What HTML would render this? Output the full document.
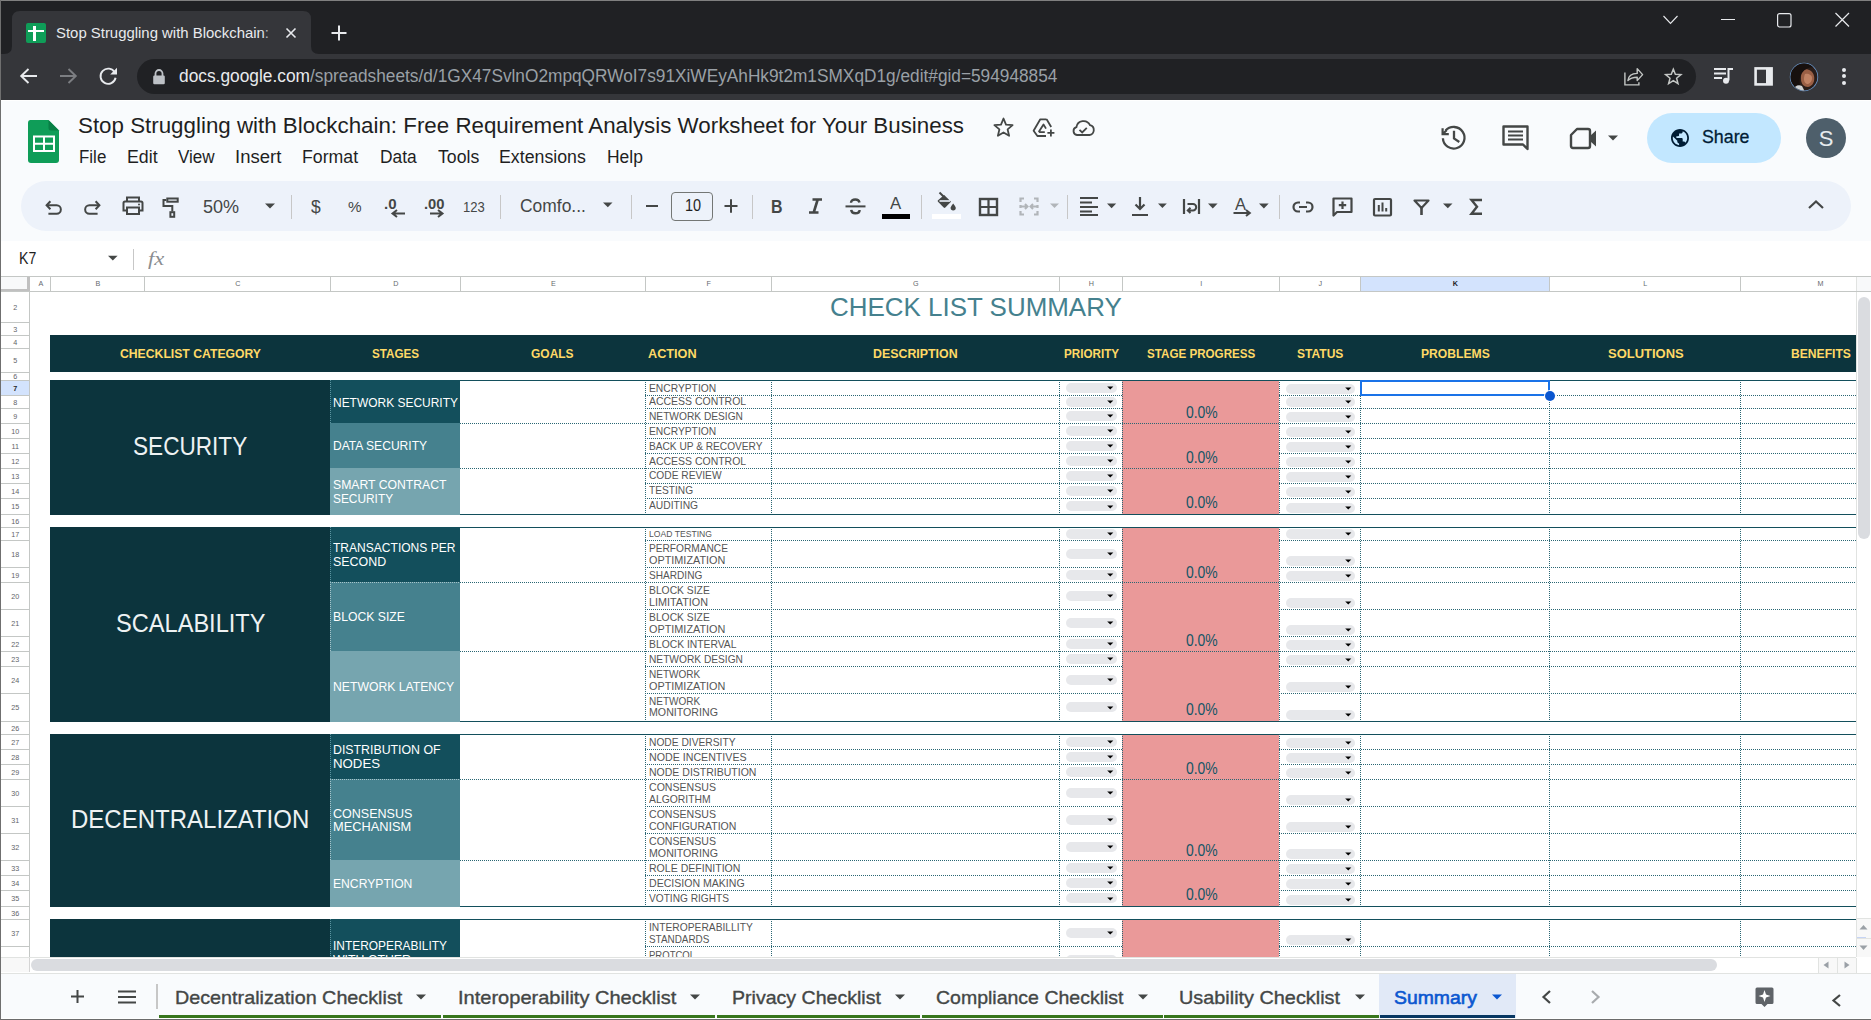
<!DOCTYPE html>
<html><head><meta charset="utf-8"><title>Check List Summary</title>
<style>
html,body{margin:0;padding:0;}
body{width:1871px;height:1020px;overflow:hidden;position:relative;background:#fff;font-family:"Liberation Sans", sans-serif;}
.t{position:absolute;white-space:nowrap;}
.r{position:absolute;}
.s{position:absolute;overflow:visible;}
</style></head><body>
<div class="r" style="left:0px;top:0px;width:1871px;height:54px;background:#202124;"></div>
<svg class="s" style="left:0px;top:0px;" width="330" height="54" viewBox="0 0 330 54"><path d="M4 54 Q12 54 12 46 L12 19 Q12 11 20 11 L303 11 Q311 11 311 19 L311 46 Q311 54 319 54 Z" fill="#35363a"/></svg>
<div class="r" style="left:26px;top:23px;width:20px;height:20px;background:#0f9d58;border-radius:2px;"></div>
<div class="r" style="left:33px;top:26px;width:2.6px;height:15px;background:#fff;"></div>
<div class="r" style="left:28px;top:29.6px;width:15.6px;height:2.7px;background:#fff;"></div>
<div class="t" style="left:56.00px;top:24.88px;font-size:15.5px;line-height:15.5px;color:#e8eaed;transform:scaleX(0.9619);transform-origin:0 0;">Stop Struggling with Blockchain:</div>
<div class="r" style="left:262px;top:20px;width:16px;height:26px;background:linear-gradient(90deg,rgba(53,54,58,0),#35363a);"></div>
<svg class="s" style="left:284px;top:26px;" width="14" height="14" viewBox="0 0 14 14"><path d="M2.5 2.5 L11.5 11.5 M11.5 2.5 L2.5 11.5" stroke="#e8eaed" stroke-width="1.6"/></svg>
<svg class="s" style="left:330px;top:24px;" width="18" height="18" viewBox="0 0 18 18"><path d="M9 1.5 V16.5 M1.5 9 H16.5" stroke="#e8eaed" stroke-width="2"/></svg>
<svg class="s" style="left:1662px;top:14px;" width="18" height="12" viewBox="0 0 18 12"><path d="M1.5 2 L8.5 9.5 L15.5 2" stroke="#e8eaed" stroke-width="1.1" fill="none"/></svg>
<div class="r" style="left:1721px;top:19px;width:13.5px;height:1.2px;background:#e8eaed;"></div>
<svg class="s" style="left:1776px;top:12px;" width="17" height="17" viewBox="0 0 17 17"><rect x="1.6" y="1.6" width="13.4" height="13.4" rx="2" stroke="#e8eaed" stroke-width="1.2" fill="none"/></svg>
<svg class="s" style="left:1834px;top:12px;" width="17" height="16" viewBox="0 0 17 16"><path d="M1.5 1 L15 14.5 M15 1 L1.5 14.5" stroke="#e8eaed" stroke-width="1.2"/></svg>
<div class="r" style="left:0px;top:54px;width:1871px;height:46px;background:#35363a;"></div>
<svg class="s" style="left:18px;top:66px;" width="22" height="20" viewBox="0 0 22 20"><path d="M19 10 H4 M10.5 3 L3.2 10 L10.5 17" stroke="#e8eaed" stroke-width="1.9" fill="none"/></svg>
<svg class="s" style="left:58px;top:66px;" width="22" height="20" viewBox="0 0 22 20"><path d="M2 10 H17 M10.5 3 L17.8 10 L10.5 17" stroke="#7c7e82" stroke-width="1.9" fill="none"/></svg>
<svg class="s" style="left:98px;top:66px;" width="22" height="21" viewBox="0 0 22 21"><path d="M16.8 6.5 A7.6 7.6 0 1 0 17.6 11.8" stroke="#e8eaed" stroke-width="1.9" fill="none"/><path d="M19 1.8 V8.6 H12.2 Z" fill="#e8eaed"/></svg>
<div class="r" style="left:137px;top:59px;width:1559px;height:35px;background:#202124;border-radius:17.5px;"></div>
<svg class="s" style="left:151px;top:68px;" width="16" height="17" viewBox="0 0 16 17"><path d="M4.5 8 V5.5 A3.5 3.5 0 0 1 11.5 5.5 V8" stroke="#bdc1c6" stroke-width="1.8" fill="none"/><rect x="2.2" y="7.6" width="11.6" height="8.6" rx="1.2" fill="#bdc1c6"/></svg>
<div class="t" style="left:179.00px;top:67.99px;font-size:17.5px;line-height:17.5px;color:#e8eaed;transform:scaleX(0.9902);transform-origin:0 0;">docs.google.com</div>
<div class="t" style="left:310.00px;top:67.99px;font-size:17.5px;line-height:17.5px;color:#9aa0a6;transform:scaleX(0.9865);transform-origin:0 0;">/spreadsheets/d/1GX47SvlnO2mpqQRWoI7s91XiWEyAhHk9t2m1SMXqD1g/edit#gid=594948854</div>
<svg class="s" style="left:1622px;top:66px;" width="24" height="22" viewBox="0 0 24 22"><path d="M2.9 6.6 V18.9 H16.9 V16.2" stroke="#c4c7c5" stroke-width="1.4" fill="none"/><path d="M5.9 14.6 C6.4 10 9.6 7.5 15.2 7.4 V2.6 L20.6 8.6 L15.2 14.6 V11.2 C10.6 11.2 7.9 12.4 5.9 14.6 Z" stroke="#c4c7c5" stroke-width="1.4" fill="none" stroke-linejoin="round"/></svg>
<svg class="s" style="left:1662px;top:66px;" width="22" height="21" viewBox="0 0 22 21"><g transform="translate(11.3 10.6) scale(0.89) translate(-11.3 -10.6)"><path d="M11.3 2.2 L13.6 8 L19.9 8.4 L15 12.4 L16.6 18.6 L11.3 15.2 L6 18.6 L7.6 12.4 L2.7 8.4 L9 8 Z" stroke="#c4c7c5" stroke-width="1.65" fill="none" stroke-linejoin="miter"/></g></svg>
<svg class="s" style="left:1712px;top:66px;" width="24" height="20" viewBox="0 0 24 20"><path d="M2 3 H14 M2 7.5 H14 M2 12 H10" stroke="#e8eaed" stroke-width="2"/><path d="M16.5 14.5 V3 H21" stroke="#e8eaed" stroke-width="2" fill="none"/><circle cx="14" cy="14.8" r="3" fill="#e8eaed"/></svg>
<svg class="s" style="left:1753px;top:66px;" width="22" height="21" viewBox="0 0 22 21"><rect x="2.6" y="2.4" width="16" height="16" stroke="#e8eaed" stroke-width="2.6" fill="none"/><rect x="13" y="2" width="6" height="17" fill="#e8eaed"/></svg>
<svg class="s" style="left:1789px;top:62px;" width="30" height="30" viewBox="0 0 30 30"><defs><clipPath id="avc"><circle cx="15" cy="15" r="13.4"/></clipPath></defs><circle cx="15" cy="15" r="14.2" fill="#6b9ad0"/><g clip-path="url(#avc)"><rect width="30" height="30" fill="#2a1d19"/><path d="M14 8 C18 6 24 9 25 14 C26 19 24 24 19 25 C15 25 12 22 12 17 C12 13 12 10 14 8Z" fill="#9a5f45"/><path d="M16 12 C19 11 23 13 23 16 C23 20 20 22 18 22 C15 21 14 17 16 12Z" fill="#c08264"/><path d="M1 4 C6 -1 19 -1 25 5 C19 5 14 8 12 13 C10 17 10 22 13 30 H1 Z" fill="#17100e"/><path d="M3 30 C5 24 9 22 13 24 L16 30Z" fill="#cfd2d4"/></g></svg>
<div class="r" style="left:1841.5px;top:67.8px;width:4px;height:4px;background:#e8eaed;border-radius:2px;"></div>
<div class="r" style="left:1841.5px;top:74.3px;width:4px;height:4px;background:#e8eaed;border-radius:2px;"></div>
<div class="r" style="left:1841.5px;top:80.7px;width:4px;height:4px;background:#e8eaed;border-radius:2px;"></div>
<div class="r" style="left:0px;top:100px;width:1871px;height:141px;background:#f9fbfd;"></div>
<div class="r" style="left:0px;top:100px;width:1871px;height:1px;background:#ffffff;"></div>
<svg class="s" style="left:27px;top:119px;" width="34" height="45" viewBox="0 0 34 45"><path d="M3.5 1 H21.5 L32 11.5 V41 Q32 44 29 44 H4 Q1 44 1 41 V4 Q1 1 3.5 1 Z" fill="#0f9d58"/><path d="M21.5 1 L32 11.5 H24 Q21.5 11.5 21.5 9 Z" fill="#087f45"/><rect x="7" y="17.5" width="20" height="14.5" fill="none" stroke="#fff" stroke-width="2"/><path d="M7 24.7 H27 M17 17.5 V32" stroke="#fff" stroke-width="2"/></svg>
<div class="t" style="left:78.00px;top:116.40px;font-size:21.5px;line-height:21.5px;color:#1f1f1f;transform:scaleX(1.0388);transform-origin:0 0;">Stop Struggling with Blockchain: Free Requirement Analysis Worksheet for Your Business</div>
<div class="t" style="left:78.60px;top:149.29px;font-size:17.5px;line-height:17.5px;color:#1f1f1f;transform:scaleX(0.9681);transform-origin:0 0;">File</div>
<div class="t" style="left:126.50px;top:149.29px;font-size:17.5px;line-height:17.5px;color:#1f1f1f;transform:scaleX(1.0147);transform-origin:0 0;">Edit</div>
<div class="t" style="left:177.70px;top:149.29px;font-size:17.5px;line-height:17.5px;color:#1f1f1f;transform:scaleX(0.9757);transform-origin:0 0;">View</div>
<div class="t" style="left:235.00px;top:149.29px;font-size:17.5px;line-height:17.5px;color:#1f1f1f;transform:scaleX(1.0579);transform-origin:0 0;">Insert</div>
<div class="t" style="left:302.30px;top:149.29px;font-size:17.5px;line-height:17.5px;color:#1f1f1f;transform:scaleX(1.0122);transform-origin:0 0;">Format</div>
<div class="t" style="left:379.70px;top:149.29px;font-size:17.5px;line-height:17.5px;color:#1f1f1f;transform:scaleX(0.9928);transform-origin:0 0;">Data</div>
<div class="t" style="left:437.70px;top:149.29px;font-size:17.5px;line-height:17.5px;color:#1f1f1f;transform:scaleX(1.0085);transform-origin:0 0;">Tools</div>
<div class="t" style="left:499.40px;top:149.29px;font-size:17.5px;line-height:17.5px;color:#1f1f1f;transform:scaleX(1.0140);transform-origin:0 0;">Extensions</div>
<div class="t" style="left:606.80px;top:149.29px;font-size:17.5px;line-height:17.5px;color:#1f1f1f;transform:scaleX(0.9975);transform-origin:0 0;">Help</div>
<svg class="s" style="left:992px;top:115.5px;" width="23" height="21" viewBox="0 0 23 21"><path d="M11.5 2.5 L14 8.6 L20.6 9.1 L15.6 13.4 L17.1 19.8 L11.5 16.4 L5.9 19.8 L7.4 13.4 L2.4 9.1 L9 8.6 Z" stroke="#444746" stroke-width="1.8" fill="none" stroke-linejoin="round"/></svg>
<svg class="s" style="left:1031px;top:117px;" width="25" height="22" viewBox="0 0 25 22"><path d="M15.6 2.3 H9.3 L2.6 13.8 L6.4 19 H15 M15.6 2.3 L20.2 10 M7.7 15.1 L12.5 7.4 L15 11.6 M7.7 15.1 H13.8" stroke="#444746" stroke-width="1.8" fill="none" stroke-linejoin="round"/><path d="M19.9 12.4 V19.4 M16.4 15.9 H23.4" stroke="#444746" stroke-width="1.8"/></svg>
<svg class="s" style="left:1070px;top:119px;" width="26" height="18" viewBox="0 0 26 18"><path d="M7 16 H19.5 A5 5 0 0 0 20 6.2 A7.2 7.2 0 0 0 6.4 8.2 A4 4 0 0 0 7 16 Z" stroke="#444746" stroke-width="1.8" fill="none"/><path d="M9.5 10.8 L12.2 13.4 L16.8 8.8" stroke="#444746" stroke-width="1.8" fill="none"/></svg>
<svg class="s" style="left:1439px;top:123px;" width="30" height="30" viewBox="0 0 30 30"><path d="M3.9 15.3 A10.8 10.8 0 1 0 6.6 7.6" stroke="#444746" stroke-width="2.3" fill="none"/><path d="M3.6 5.2 V11.2 H9.8 M3.8 11 L7.6 7.2" stroke="#444746" stroke-width="2.2" fill="none"/><path d="M15 7.7 V15.5 L20.3 19" stroke="#444746" stroke-width="2.3" fill="none"/></svg>
<svg class="s" style="left:1501px;top:124px;" width="30" height="28" viewBox="0 0 30 28"><path d="M2.5 2.5 H26.5 V25 L22 20.5 H2.5 Z" stroke="#444746" stroke-width="2.4" fill="none" stroke-linejoin="round"/><path d="M7 7.5 H22 M7 11.5 H22 M7 15.5 H22" stroke="#444746" stroke-width="2.2"/></svg>
<svg class="s" style="left:1568px;top:126px;" width="32" height="25" viewBox="0 0 32 25"><path d="M9 3 H20 Q22 3 22 5 V20 Q22 22 20 22 H5 Q3 22 3 20 V9 Z" stroke="#444746" stroke-width="2.4" fill="none" stroke-linejoin="round"/><path d="M22 10 L28 4.5 V20.5 L22 15 Z" fill="#444746"/></svg>
<svg class="s" style="left:1607px;top:134px;" width="13" height="8" viewBox="0 0 13 8"><path d="M1 1.5 H11 L6 6.5 Z" fill="#444746"/></svg>
<div class="r" style="left:1647px;top:113px;width:134px;height:50px;background:#c2e7ff;border-radius:25px;"></div>
<svg class="s" style="left:1670px;top:128px;" width="20" height="20" viewBox="0 0 20 20"><path transform="scale(0.9) translate(-0.9,-0.9)" d="M12 2C6.48 2 2 6.48 2 12s4.48 10 10 10 10-4.48 10-10S17.52 2 12 2zm-1 17.93c-3.95-.49-7-3.85-7-7.93 0-.62.08-1.21.21-1.79L9 15v1c0 1.1.9 2 2 2v1.93zm6.9-2.54c-.26-.81-1-1.39-1.9-1.39h-1v-3c0-.55-.45-1-1-1H8v-2h2c.55 0 1-.45 1-1V7h2c1.1 0 2-.9 2-2v-.41c2.93 1.19 5 4.06 5 7.41 0 2.08-.8 3.97-2.1 5.39z" fill="#001d35"/></svg>
<div class="t" style="left:1701.50px;top:127.74px;font-size:18.5px;line-height:18.5px;color:#001d35;transform:scaleX(0.9622);transform-origin:0 0;-webkit-text-stroke:0.3px #001d35;">Share</div>
<div class="r" style="left:1806px;top:118px;width:40px;height:40px;background:#4e5f6b;border-radius:20px;"></div>
<div class="t" style="left:1818.66px;top:127.88px;font-size:22px;line-height:22px;color:#e6ebee;">S</div>
<div class="r" style="left:21px;top:181px;width:1830px;height:50px;background:#edf2fa;border-radius:25px;"></div>
<svg class="s" style="left:44px;top:198px;" width="20" height="19" viewBox="0 0 20 19"><path d="M6.4 3.2 L2.6 7.2 L6.4 11.2" stroke="#444746" stroke-width="2" fill="none"/><path d="M3 7.2 H12.6 A4.25 4.25 0 0 1 12.6 15.7 H4.4" stroke="#444746" stroke-width="2" fill="none"/></svg>
<svg class="s" style="left:82px;top:198px;" width="20" height="19" viewBox="0 0 20 19"><path d="M13.6 3.2 L17.4 7.2 L13.6 11.2" stroke="#444746" stroke-width="2" fill="none"/><path d="M17 7.2 H7.4 A4.25 4.25 0 0 0 7.4 15.7 H15.6" stroke="#444746" stroke-width="2" fill="none"/></svg>
<svg class="s" style="left:121px;top:195.3px;" width="24" height="21" viewBox="0 0 24 21"><path d="M6 6 V2.5 H18 V6" stroke="#444746" stroke-width="2" fill="none"/><path d="M5.5 15.5 H2.5 V8 Q2.5 6.5 4 6.5 H20 Q21.5 6.5 21.5 8 V15.5 H18.5" stroke="#444746" stroke-width="2" fill="none"/><rect x="6" y="12.5" width="12" height="6.5" stroke="#444746" stroke-width="2" fill="none"/><circle cx="18" cy="9.6" r="1" fill="#444746"/></svg>
<svg class="s" style="left:160px;top:196px;" width="21" height="23" viewBox="0 0 21 23"><rect x="7.3" y="2.5" width="10.4" height="3.2" stroke="#444746" stroke-width="2" fill="none"/><path d="M6.3 4.1 H3.5 V10 H12.3 V15.5" stroke="#444746" stroke-width="2" fill="none"/><rect x="10.4" y="16.2" width="3.8" height="4.6" stroke="#444746" stroke-width="2" fill="none"/></svg>
<div class="t" style="left:202.80px;top:199.39px;font-size:17.5px;line-height:17.5px;color:#444746;transform:scaleX(1.0307);transform-origin:0 0;">50%</div>
<svg class="s" style="left:264px;top:202px;" width="12" height="8" viewBox="0 0 12 8"><path d="M1 1.6 H11.0 L6.0 6.6 Z" fill="#444746"/></svg>
<div class="r" style="left:291px;top:194.5px;width:1px;height:24px;background:#c7c7c7;"></div>
<div class="r" style="left:500px;top:194.5px;width:1px;height:24px;background:#c7c7c7;"></div>
<div class="r" style="left:631px;top:194.5px;width:1px;height:24px;background:#c7c7c7;"></div>
<div class="r" style="left:752px;top:194.5px;width:1px;height:24px;background:#c7c7c7;"></div>
<div class="r" style="left:921px;top:194.5px;width:1px;height:24px;background:#c7c7c7;"></div>
<div class="r" style="left:1067px;top:194.5px;width:1px;height:24px;background:#c7c7c7;"></div>
<div class="r" style="left:1279px;top:194.5px;width:1px;height:24px;background:#c7c7c7;"></div>
<div class="t" style="left:310.80px;top:199.39px;font-size:17.5px;line-height:17.5px;color:#444746;transform:scaleX(0.9966);transform-origin:0 0;">$</div>
<div class="t" style="left:348.00px;top:199.48px;font-size:15.5px;line-height:15.5px;color:#444746;transform:scaleX(0.9868);transform-origin:0 0;">%</div>
<div class="t" style="left:384.00px;top:197.15px;font-size:14px;line-height:14px;color:#444746;transform:scaleX(1.0706);transform-origin:0 0;font-weight:bold;">.0</div>
<svg class="s" style="left:389px;top:209px;" width="18" height="9" viewBox="0 0 18 9"><path d="M4 4.5 H16 M8 1 L3.5 4.5 L8 8" stroke="#444746" stroke-width="2" fill="none"/></svg>
<div class="t" style="left:423.70px;top:197.15px;font-size:14px;line-height:14px;color:#444746;transform:scaleX(1.0533);transform-origin:0 0;font-weight:bold;">.00</div>
<svg class="s" style="left:428px;top:209px;" width="18" height="9" viewBox="0 0 18 9"><path d="M2 4.5 H14 M10 1 L14.5 4.5 L10 8" stroke="#444746" stroke-width="2" fill="none"/></svg>
<div class="t" style="left:463.40px;top:198.78px;font-size:15.5px;line-height:15.5px;color:#444746;transform:scaleX(0.8430);transform-origin:0 0;">123</div>
<div class="t" style="left:519.90px;top:198.29px;font-size:17.5px;line-height:17.5px;color:#444746;transform:scaleX(0.9965);transform-origin:0 0;">Comfo...</div>
<svg class="s" style="left:602px;top:201px;" width="11" height="8" viewBox="0 0 11 8"><path d="M1 1.6 H10.5 L5.8 6.3 Z" fill="#444746"/></svg>
<div class="r" style="left:645.6px;top:204.8px;width:12px;height:1.8px;background:#444746;"></div>
<div class="r" style="left:671px;top:191.5px;width:42px;height:29px;background:transparent;border:1px solid #747775;border-radius:4px;box-sizing:border-box;"></div>
<div class="t" style="left:684.60px;top:198.16px;font-size:16px;line-height:16px;color:#1f1f1f;transform:scaleX(0.9046);transform-origin:0 0;">10</div>
<svg class="s" style="left:723px;top:198px;" width="16" height="16" viewBox="0 0 16 16"><path d="M8 1.2 V14.8 M1.5 8 H14.5" stroke="#444746" stroke-width="2"/></svg>
<div class="t" style="left:770.80px;top:197.56px;font-size:18px;line-height:18px;color:#444746;font-weight:bold;transform:scaleX(0.8847);transform-origin:0 0;">B</div>
<svg class="s" style="left:806px;top:198px;" width="19" height="16" viewBox="0 0 19 16"><path d="M6.5 1.5 H16 M3 14.5 H12.5 M11.7 1.5 L7.7 14.5" stroke="#444746" stroke-width="2.6" fill="none"/></svg>
<svg class="s" style="left:844px;top:198px;" width="23" height="17" viewBox="0 0 23 17"><path d="M1.5 8.4 H21.5" stroke="#444746" stroke-width="2"/><path d="M15.5 4.5 C15 2 13 1.5 11.3 1.5 C8.5 1.5 7 3 7 4.7 M7.2 11.8 C7.5 14 9 15.3 11.3 15.3 C14 15.3 15.6 13.8 15.6 12" stroke="#444746" stroke-width="2.4" fill="none"/></svg>
<div class="t" style="left:890.00px;top:195.96px;font-size:16px;line-height:16px;color:#444746;transform:scaleX(1.0495);transform-origin:0 0;">A</div>
<div class="r" style="left:882px;top:214px;width:28px;height:5px;background:#000000;"></div>
<svg class="s" style="left:935px;top:191px;" width="22" height="20" viewBox="0 0 22 20"><path d="M4.5 1.5 L9 6" stroke="#444746" stroke-width="2"/><path d="M9.2 4 L16 10.8 L10.3 16.5 Q9.5 17.3 8.7 16.5 L3 10.8 Q2.2 10 3 9.2 Z" fill="#444746"/><path d="M4.5 10 H15" stroke="#edf2fa" stroke-width="1.6"/><path d="M18.2 12.5 Q20.8 15.8 20.8 16.8 A2.6 2.6 0 0 1 15.6 16.8 Q15.6 15.8 18.2 12.5 Z" fill="#444746"/></svg>
<div class="r" style="left:932px;top:214px;width:29px;height:5px;background:#ffffff;"></div>
<svg class="s" style="left:978px;top:197px;" width="21" height="20" viewBox="0 0 21 20"><rect x="2" y="2" width="17" height="16" stroke="#444746" stroke-width="2.4" fill="none"/><path d="M10.5 2 V18 M2 10 H19" stroke="#444746" stroke-width="2.2"/></svg>
<svg class="s" style="left:1018px;top:196px;" width="22" height="21" viewBox="0 0 22 21"><path d="M2.5 6 V2.5 H6 M16 2.5 H19.5 V6 M2.5 15 V18.5 H6 M16 18.5 H19.5 V15 M2.5 9 V12 M19.5 9 V12" stroke="#b1b5b9" stroke-width="2.2" fill="none"/><path d="M3 10.5 H9.5 M7 8 L9.5 10.5 L7 13 M19 10.5 H12.5 M15 8 L12.5 10.5 L15 13" stroke="#b1b5b9" stroke-width="2" fill="none"/></svg>
<svg class="s" style="left:1049px;top:202px;" width="11" height="8" viewBox="0 0 11 8"><path d="M1 1.6 H10.0 L5.5 6.1 Z" fill="#b1b5b9"/></svg>
<svg class="s" style="left:1079px;top:196px;" width="20" height="20" viewBox="0 0 20 20"><path d="M1 2 H19 M1 6.5 H13 M1 11 H19 M1 15.5 H13 M1 19 H19" stroke="#444746" stroke-width="2"/></svg>
<svg class="s" style="left:1106px;top:202px;" width="11" height="8" viewBox="0 0 11 8"><path d="M1 1.6 H10.2 L5.6 6.2 Z" fill="#444746"/></svg>
<svg class="s" style="left:1131px;top:196px;" width="18" height="21" viewBox="0 0 18 21"><path d="M9 1 V13 M4.5 8.5 L9 13 L13.5 8.5" stroke="#444746" stroke-width="2.2" fill="none"/><path d="M1 19 H17" stroke="#444746" stroke-width="2"/></svg>
<svg class="s" style="left:1157px;top:202px;" width="10" height="8" viewBox="0 0 10 8"><path d="M1 1.6 H9.8 L5.4 6.0 Z" fill="#444746"/></svg>
<svg class="s" style="left:1182px;top:198px;" width="19" height="17" viewBox="0 0 19 17"><path d="M2 1 V16 M17 1 V16" stroke="#444746" stroke-width="2.2"/><path d="M5.5 6 H11 A3.2 3.2 0 0 1 11 12.4 H6.5 M8.5 9.8 L5.8 12.4 L8.5 15" stroke="#444746" stroke-width="2" fill="none"/></svg>
<svg class="s" style="left:1207px;top:202px;" width="11" height="8" viewBox="0 0 11 8"><path d="M1 1.6 H10.6 L5.8 6.4 Z" fill="#444746"/></svg>
<div class="t" style="left:1235.00px;top:196.96px;font-size:16px;line-height:16px;color:#444746;transform:scaleX(1.0307);transform-origin:0 0;">A</div>
<svg class="s" style="left:1232px;top:209px;" width="20" height="8" viewBox="0 0 20 8"><path d="M1.5 4 H17.5 M14 1 L17.8 4 L14 7" stroke="#444746" stroke-width="2" fill="none"/></svg>
<svg class="s" style="left:1258px;top:202px;" width="11" height="8" viewBox="0 0 11 8"><path d="M1 1.6 H10.7 L5.9 6.5 Z" fill="#444746"/></svg>
<svg class="s" style="left:1292px;top:200px;" width="22" height="14" viewBox="0 0 22 14"><path d="M8 2.5 H6 A4.5 4.5 0 0 0 6 11.5 H8 M14 2.5 H16 A4.5 4.5 0 0 1 16 11.5 H14 M7 7 H15" stroke="#444746" stroke-width="2.2" fill="none"/></svg>
<svg class="s" style="left:1331px;top:196px;" width="23" height="22" viewBox="0 0 23 22"><path d="M2.5 2.5 H20.5 V16 H6 L2.5 19.5 Z" stroke="#444746" stroke-width="2.2" fill="none" stroke-linejoin="round"/><path d="M11.5 5.5 V13 M7.8 9.2 H15.2" stroke="#444746" stroke-width="2.2"/></svg>
<svg class="s" style="left:1372px;top:197px;" width="21" height="20" viewBox="0 0 21 20"><rect x="2" y="2" width="17" height="16.5" rx="1" stroke="#444746" stroke-width="2.2" fill="none"/><path d="M6.8 8 V14.5 M10.5 5.5 V14.5 M14.2 11 V14.5" stroke="#444746" stroke-width="2"/></svg>
<svg class="s" style="left:1413px;top:199px;" width="17" height="17" viewBox="0 0 17 17"><path d="M1.5 1.5 H15.5 L8.5 9 Z" stroke="#444746" stroke-width="2.2" fill="none" stroke-linejoin="round"/><path d="M8.5 8 V16" stroke="#444746" stroke-width="2.6"/></svg>
<svg class="s" style="left:1442px;top:202px;" width="11" height="8" viewBox="0 0 11 8"><path d="M1 1.6 H10.5 L5.8 6.3 Z" fill="#444746"/></svg>
<svg class="s" style="left:1470px;top:198px;" width="13" height="18" viewBox="0 0 13 18"><path d="M12 2 H1.5 L7 8.8 L1.5 15.7 H12" stroke="#444746" stroke-width="2.4" fill="none"/></svg>
<svg class="s" style="left:1807px;top:199px;" width="18" height="11" viewBox="0 0 18 11"><path d="M2 9 L9 2.5 L16 9" stroke="#444746" stroke-width="2.2" fill="none"/></svg>
<div class="r" style="left:0px;top:241px;width:1871px;height:35px;background:#ffffff;"></div>
<div class="t" style="left:19.20px;top:251.46px;font-size:16px;line-height:16px;color:#1f1f1f;transform:scaleX(0.8840);transform-origin:0 0;">K7</div>
<svg class="s" style="left:107px;top:255px;" width="12" height="7" viewBox="0 0 12 7"><path d="M1 0.8 H10.6 L5.8 5.6 Z" fill="#444746"/></svg>
<div class="r" style="left:133px;top:249px;width:1px;height:21px;background:#c7c7c7;"></div>
<div class="t" style="left:147.50px;top:249.42px;font-size:19px;line-height:19px;color:#8a8d91;font-style:italic;transform:scaleX(1.1841);transform-origin:0 0;font-family:Liberation Serif,serif;">fx</div>
<div class="r" style="left:1px;top:276px;width:1855px;height:681px;background:#ffffff;"></div>
<div class="r" style="left:1361px;top:277px;width:188px;height:14px;background:#d3e3fd;"></div>
<div class="r" style="left:1px;top:276px;width:1870px;height:1px;background:#c4c7c5;"></div>
<div class="r" style="left:29px;top:291px;width:1827px;height:1px;background:#c4c7c5;"></div>
<div class="r" style="left:1px;top:277px;width:26px;height:12px;background:#f8f9fa;"></div>
<div class="r" style="left:27px;top:277px;width:3px;height:14px;background:#c0c0c0;"></div>
<div class="r" style="left:1px;top:289px;width:29px;height:2px;background:#c0c0c0;"></div>
<div class="r" style="left:50px;top:277px;width:1px;height:14px;background:#c4c7c5;"></div>
<div class="r" style="left:144px;top:277px;width:1px;height:14px;background:#c4c7c5;"></div>
<div class="r" style="left:330px;top:277px;width:1px;height:14px;background:#c4c7c5;"></div>
<div class="r" style="left:460px;top:277px;width:1px;height:14px;background:#c4c7c5;"></div>
<div class="r" style="left:645px;top:277px;width:1px;height:14px;background:#c4c7c5;"></div>
<div class="r" style="left:771px;top:277px;width:1px;height:14px;background:#c4c7c5;"></div>
<div class="r" style="left:1059px;top:277px;width:1px;height:14px;background:#c4c7c5;"></div>
<div class="r" style="left:1122px;top:277px;width:1px;height:14px;background:#c4c7c5;"></div>
<div class="r" style="left:1279px;top:277px;width:1px;height:14px;background:#c4c7c5;"></div>
<div class="r" style="left:1360px;top:277px;width:1px;height:14px;background:#c4c7c5;"></div>
<div class="r" style="left:1549px;top:277px;width:1px;height:14px;background:#c4c7c5;"></div>
<div class="r" style="left:1740px;top:277px;width:1px;height:14px;background:#c4c7c5;"></div>
<div class="r" style="left:1856px;top:277px;width:1px;height:14px;background:#c4c7c5;"></div>
<div class="t" style="left:38.40px;top:280.11px;font-size:7.2px;line-height:7.2px;color:#666a6e;">A</div>
<div class="t" style="left:95.40px;top:280.11px;font-size:7.2px;line-height:7.2px;color:#666a6e;">B</div>
<div class="t" style="left:235.20px;top:280.11px;font-size:7.2px;line-height:7.2px;color:#666a6e;">C</div>
<div class="t" style="left:393.20px;top:280.11px;font-size:7.2px;line-height:7.2px;color:#666a6e;">D</div>
<div class="t" style="left:550.90px;top:280.11px;font-size:7.2px;line-height:7.2px;color:#666a6e;">E</div>
<div class="t" style="left:706.60px;top:280.11px;font-size:7.2px;line-height:7.2px;color:#666a6e;">F</div>
<div class="t" style="left:913.00px;top:280.11px;font-size:7.2px;line-height:7.2px;color:#666a6e;">G</div>
<div class="t" style="left:1088.70px;top:280.11px;font-size:7.2px;line-height:7.2px;color:#666a6e;">H</div>
<div class="t" style="left:1200.30px;top:280.11px;font-size:7.2px;line-height:7.2px;color:#666a6e;">I</div>
<div class="t" style="left:1318.50px;top:280.11px;font-size:7.2px;line-height:7.2px;color:#666a6e;">J</div>
<div class="t" style="left:1452.70px;top:280.11px;font-size:7.2px;line-height:7.2px;color:#1f1f1f;font-weight:bold;">K</div>
<div class="t" style="left:1643.30px;top:280.11px;font-size:7.2px;line-height:7.2px;color:#666a6e;">L</div>
<div class="t" style="left:1817.50px;top:280.11px;font-size:7.2px;line-height:7.2px;color:#666a6e;">M</div>
<div class="r" style="left:29px;top:291px;width:1px;height:666px;background:#c4c7c5;"></div>
<div class="r" style="left:1px;top:380px;width:28px;height:15px;background:#d3e3fd;"></div>
<div class="r" style="left:1px;top:291px;width:28px;height:1px;background:#c4c7c5;"></div>
<div class="r" style="left:1px;top:322px;width:28px;height:1px;background:#c4c7c5;"></div>
<div class="r" style="left:1px;top:335px;width:28px;height:1px;background:#c4c7c5;"></div>
<div class="r" style="left:1px;top:348px;width:28px;height:1px;background:#c4c7c5;"></div>
<div class="r" style="left:1px;top:372px;width:28px;height:1px;background:#c4c7c5;"></div>
<div class="r" style="left:1px;top:380px;width:28px;height:1px;background:#c4c7c5;"></div>
<div class="r" style="left:1px;top:395px;width:28px;height:1px;background:#c4c7c5;"></div>
<div class="r" style="left:1px;top:408px;width:28px;height:1px;background:#c4c7c5;"></div>
<div class="r" style="left:1px;top:423px;width:28px;height:1px;background:#c4c7c5;"></div>
<div class="r" style="left:1px;top:438px;width:28px;height:1px;background:#c4c7c5;"></div>
<div class="r" style="left:1px;top:453px;width:28px;height:1px;background:#c4c7c5;"></div>
<div class="r" style="left:1px;top:468px;width:28px;height:1px;background:#c4c7c5;"></div>
<div class="r" style="left:1px;top:483px;width:28px;height:1px;background:#c4c7c5;"></div>
<div class="r" style="left:1px;top:498px;width:28px;height:1px;background:#c4c7c5;"></div>
<div class="r" style="left:1px;top:514px;width:28px;height:1px;background:#c4c7c5;"></div>
<div class="r" style="left:1px;top:527px;width:28px;height:1px;background:#c4c7c5;"></div>
<div class="r" style="left:1px;top:540px;width:28px;height:1px;background:#c4c7c5;"></div>
<div class="r" style="left:1px;top:567px;width:28px;height:1px;background:#c4c7c5;"></div>
<div class="r" style="left:1px;top:582px;width:28px;height:1px;background:#c4c7c5;"></div>
<div class="r" style="left:1px;top:609px;width:28px;height:1px;background:#c4c7c5;"></div>
<div class="r" style="left:1px;top:636px;width:28px;height:1px;background:#c4c7c5;"></div>
<div class="r" style="left:1px;top:651px;width:28px;height:1px;background:#c4c7c5;"></div>
<div class="r" style="left:1px;top:666px;width:28px;height:1px;background:#c4c7c5;"></div>
<div class="r" style="left:1px;top:693px;width:28px;height:1px;background:#c4c7c5;"></div>
<div class="r" style="left:1px;top:721px;width:28px;height:1px;background:#c4c7c5;"></div>
<div class="r" style="left:1px;top:734px;width:28px;height:1px;background:#c4c7c5;"></div>
<div class="r" style="left:1px;top:749px;width:28px;height:1px;background:#c4c7c5;"></div>
<div class="r" style="left:1px;top:764px;width:28px;height:1px;background:#c4c7c5;"></div>
<div class="r" style="left:1px;top:779px;width:28px;height:1px;background:#c4c7c5;"></div>
<div class="r" style="left:1px;top:806px;width:28px;height:1px;background:#c4c7c5;"></div>
<div class="r" style="left:1px;top:833px;width:28px;height:1px;background:#c4c7c5;"></div>
<div class="r" style="left:1px;top:860px;width:28px;height:1px;background:#c4c7c5;"></div>
<div class="r" style="left:1px;top:875px;width:28px;height:1px;background:#c4c7c5;"></div>
<div class="r" style="left:1px;top:890px;width:28px;height:1px;background:#c4c7c5;"></div>
<div class="r" style="left:1px;top:906px;width:28px;height:1px;background:#c4c7c5;"></div>
<div class="r" style="left:1px;top:919px;width:28px;height:1px;background:#c4c7c5;"></div>
<div class="r" style="left:1px;top:946px;width:28px;height:1px;background:#c4c7c5;"></div>
<div class="t" style="left:13.20px;top:303.51px;font-size:7.2px;line-height:7.2px;color:#5f6368;">2</div>
<div class="t" style="left:13.20px;top:325.51px;font-size:7.2px;line-height:7.2px;color:#5f6368;">3</div>
<div class="t" style="left:13.20px;top:338.51px;font-size:7.2px;line-height:7.2px;color:#5f6368;">4</div>
<div class="t" style="left:13.20px;top:357.01px;font-size:7.2px;line-height:7.2px;color:#5f6368;">5</div>
<div class="t" style="left:13.20px;top:373.01px;font-size:7.2px;line-height:7.2px;color:#5f6368;">6</div>
<div class="t" style="left:13.20px;top:384.51px;font-size:7.2px;line-height:7.2px;color:#1f1f1f;font-weight:bold;">7</div>
<div class="t" style="left:13.20px;top:398.51px;font-size:7.2px;line-height:7.2px;color:#5f6368;">8</div>
<div class="t" style="left:13.20px;top:412.51px;font-size:7.2px;line-height:7.2px;color:#5f6368;">9</div>
<div class="t" style="left:11.20px;top:427.51px;font-size:7.2px;line-height:7.2px;color:#5f6368;">10</div>
<div class="t" style="left:11.46px;top:442.51px;font-size:7.2px;line-height:7.2px;color:#5f6368;">11</div>
<div class="t" style="left:11.20px;top:457.51px;font-size:7.2px;line-height:7.2px;color:#5f6368;">12</div>
<div class="t" style="left:11.20px;top:472.51px;font-size:7.2px;line-height:7.2px;color:#5f6368;">13</div>
<div class="t" style="left:11.20px;top:487.51px;font-size:7.2px;line-height:7.2px;color:#5f6368;">14</div>
<div class="t" style="left:11.20px;top:503.01px;font-size:7.2px;line-height:7.2px;color:#5f6368;">15</div>
<div class="t" style="left:11.20px;top:517.51px;font-size:7.2px;line-height:7.2px;color:#5f6368;">16</div>
<div class="t" style="left:11.20px;top:530.51px;font-size:7.2px;line-height:7.2px;color:#5f6368;">17</div>
<div class="t" style="left:11.20px;top:550.51px;font-size:7.2px;line-height:7.2px;color:#5f6368;">18</div>
<div class="t" style="left:11.20px;top:571.51px;font-size:7.2px;line-height:7.2px;color:#5f6368;">19</div>
<div class="t" style="left:11.20px;top:592.51px;font-size:7.2px;line-height:7.2px;color:#5f6368;">20</div>
<div class="t" style="left:11.20px;top:619.51px;font-size:7.2px;line-height:7.2px;color:#5f6368;">21</div>
<div class="t" style="left:11.20px;top:640.51px;font-size:7.2px;line-height:7.2px;color:#5f6368;">22</div>
<div class="t" style="left:11.20px;top:655.51px;font-size:7.2px;line-height:7.2px;color:#5f6368;">23</div>
<div class="t" style="left:11.20px;top:676.51px;font-size:7.2px;line-height:7.2px;color:#5f6368;">24</div>
<div class="t" style="left:11.20px;top:704.01px;font-size:7.2px;line-height:7.2px;color:#5f6368;">25</div>
<div class="t" style="left:11.20px;top:724.51px;font-size:7.2px;line-height:7.2px;color:#5f6368;">26</div>
<div class="t" style="left:11.20px;top:738.51px;font-size:7.2px;line-height:7.2px;color:#5f6368;">27</div>
<div class="t" style="left:11.20px;top:753.51px;font-size:7.2px;line-height:7.2px;color:#5f6368;">28</div>
<div class="t" style="left:11.20px;top:768.51px;font-size:7.2px;line-height:7.2px;color:#5f6368;">29</div>
<div class="t" style="left:11.20px;top:789.51px;font-size:7.2px;line-height:7.2px;color:#5f6368;">30</div>
<div class="t" style="left:11.20px;top:816.51px;font-size:7.2px;line-height:7.2px;color:#5f6368;">31</div>
<div class="t" style="left:11.20px;top:843.51px;font-size:7.2px;line-height:7.2px;color:#5f6368;">32</div>
<div class="t" style="left:11.20px;top:864.51px;font-size:7.2px;line-height:7.2px;color:#5f6368;">33</div>
<div class="t" style="left:11.20px;top:879.51px;font-size:7.2px;line-height:7.2px;color:#5f6368;">34</div>
<div class="t" style="left:11.20px;top:895.01px;font-size:7.2px;line-height:7.2px;color:#5f6368;">35</div>
<div class="t" style="left:11.20px;top:909.51px;font-size:7.2px;line-height:7.2px;color:#5f6368;">36</div>
<div class="t" style="left:11.20px;top:929.51px;font-size:7.2px;line-height:7.2px;color:#5f6368;">37</div>
<div class="t" style="left:829.90px;top:294.24px;font-size:26.3px;line-height:26.3px;color:#45818e;transform:scaleX(0.9868);transform-origin:0 0;">CHECK LIST SUMMARY</div>
<div class="r" style="left:50px;top:335px;width:1806px;height:37px;background:#0c343d;"></div>
<div class="t" style="left:120.20px;top:346.56px;font-size:13.4px;line-height:13.4px;color:#ffd966;font-weight:bold;transform:scaleX(0.9112);transform-origin:0 0;">CHECKLIST CATEGORY</div>
<div class="t" style="left:372.00px;top:346.56px;font-size:13.4px;line-height:13.4px;color:#ffd966;font-weight:bold;transform:scaleX(0.8705);transform-origin:0 0;">STAGES</div>
<div class="t" style="left:531.40px;top:346.56px;font-size:13.4px;line-height:13.4px;color:#ffd966;font-weight:bold;transform:scaleX(0.8941);transform-origin:0 0;">GOALS</div>
<div class="t" style="left:647.80px;top:346.56px;font-size:13.4px;line-height:13.4px;color:#ffd966;font-weight:bold;transform:scaleX(0.9482);transform-origin:0 0;">ACTION</div>
<div class="t" style="left:873.40px;top:346.56px;font-size:13.4px;line-height:13.4px;color:#ffd966;font-weight:bold;transform:scaleX(0.9249);transform-origin:0 0;">DESCRIPTION</div>
<div class="t" style="left:1063.70px;top:346.56px;font-size:13.4px;line-height:13.4px;color:#ffd966;font-weight:bold;transform:scaleX(0.8707);transform-origin:0 0;">PRIORITY</div>
<div class="t" style="left:1147.10px;top:346.56px;font-size:13.4px;line-height:13.4px;color:#ffd966;font-weight:bold;transform:scaleX(0.8683);transform-origin:0 0;">STAGE PROGRESS</div>
<div class="t" style="left:1297.20px;top:346.56px;font-size:13.4px;line-height:13.4px;color:#ffd966;font-weight:bold;transform:scaleX(0.8990);transform-origin:0 0;">STATUS</div>
<div class="t" style="left:1421.00px;top:346.56px;font-size:13.4px;line-height:13.4px;color:#ffd966;font-weight:bold;transform:scaleX(0.9060);transform-origin:0 0;">PROBLEMS</div>
<div class="t" style="left:1607.60px;top:346.56px;font-size:13.4px;line-height:13.4px;color:#ffd966;font-weight:bold;transform:scaleX(0.9684);transform-origin:0 0;">SOLUTIONS</div>
<div class="t" style="left:1790.50px;top:346.56px;font-size:13.4px;line-height:13.4px;color:#ffd966;font-weight:bold;transform:scaleX(0.9040);transform-origin:0 0;">BENEFITS</div>
<div class="r" style="left:50px;top:380px;width:280px;height:135px;background:#0c343d;"></div>
<div class="t" style="left:133.40px;top:432.79px;font-size:26px;line-height:26px;color:#eef2f3;transform:scaleX(0.8687);transform-origin:0 0;">SECURITY</div>
<div class="r" style="left:330px;top:380px;width:130px;height:43px;background:#134f5c;"></div>
<div class="t" style="left:332.90px;top:395.74px;font-size:13.3px;line-height:13.3px;color:#ffffff;transform:scaleX(0.8998);transform-origin:0 0;">NETWORK SECURITY</div>
<div class="r" style="left:1122px;top:380px;width:157px;height:43px;background:#ea9999;"></div>
<div class="t" style="left:1185.90px;top:404.40px;font-size:16.3px;line-height:16.3px;color:#125566;transform:scaleX(0.8559);transform-origin:0 0;">0.0%</div>
<div class="r" style="left:330px;top:423px;width:130px;height:45px;background:#45818e;"></div>
<div class="t" style="left:332.90px;top:439.14px;font-size:13.3px;line-height:13.3px;color:#ffffff;transform:scaleX(0.9074);transform-origin:0 0;">DATA SECURITY</div>
<div class="r" style="left:1122px;top:423px;width:157px;height:45px;background:#ea9999;"></div>
<div class="t" style="left:1185.90px;top:449.20px;font-size:16.3px;line-height:16.3px;color:#125566;transform:scaleX(0.8559);transform-origin:0 0;">0.0%</div>
<div class="r" style="left:460px;top:423px;width:1396px;height:1px;background:repeating-linear-gradient(90deg,#2a6673 0 1px,transparent 1px 2px);"></div>
<div class="r" style="left:330px;top:468px;width:130px;height:47px;background:#76a5af;"></div>
<div class="t" style="left:332.90px;top:478.14px;font-size:13.3px;line-height:13.3px;color:#ffffff;transform:scaleX(0.9179);transform-origin:0 0;">SMART CONTRACT</div>
<div class="t" style="left:332.90px;top:491.74px;font-size:13.3px;line-height:13.3px;color:#ffffff;transform:scaleX(0.8937);transform-origin:0 0;">SECURITY</div>
<div class="r" style="left:1122px;top:468px;width:157px;height:46px;background:#ea9999;"></div>
<div class="t" style="left:1185.90px;top:493.70px;font-size:16.3px;line-height:16.3px;color:#125566;transform:scaleX(0.8559);transform-origin:0 0;">0.0%</div>
<div class="r" style="left:460px;top:468px;width:1396px;height:1px;background:repeating-linear-gradient(90deg,#2a6673 0 1px,transparent 1px 2px);"></div>
<div class="r" style="left:330px;top:380px;width:1px;height:43px;background:repeating-linear-gradient(180deg,#5b94a0 0 1px,transparent 1px 2px);"></div>
<div class="t" style="left:648.90px;top:382.83px;font-size:10.6px;line-height:10.6px;color:#555555;transform:scaleX(0.9696);transform-origin:0 0;">ENCRYPTION</div>
<div class="r" style="left:1066px;top:382.8px;width:50.5px;height:10px;background:#e7e8eb;border-radius:5px;"></div>
<svg class="s" style="left:1107px;top:386.4px;" width="7" height="4" viewBox="0 0 7 4"><path d="M0.2 0.5 H6.3 L3.25 3.6 Z" fill="#000"/></svg>
<div class="r" style="left:1286px;top:383.7px;width:69px;height:10px;background:#e7e8eb;border-radius:5px;"></div>
<svg class="s" style="left:1345px;top:387.3px;" width="7" height="4" viewBox="0 0 7 4"><path d="M0.2 0.5 H6.3 L3.25 3.6 Z" fill="#000"/></svg>
<div class="r" style="left:645px;top:395px;width:478px;height:1px;background:repeating-linear-gradient(90deg,#2a6673 0 1px,transparent 1px 2px);"></div>
<div class="r" style="left:1279px;top:395px;width:577px;height:1px;background:repeating-linear-gradient(90deg,#2a6673 0 1px,transparent 1px 2px);"></div>
<div class="t" style="left:648.90px;top:395.63px;font-size:10.6px;line-height:10.6px;color:#555555;transform:scaleX(0.9882);transform-origin:0 0;">ACCESS CONTROL</div>
<div class="r" style="left:1066px;top:396.8px;width:50.5px;height:10px;background:#e7e8eb;border-radius:5px;"></div>
<svg class="s" style="left:1107px;top:400.4px;" width="7" height="4" viewBox="0 0 7 4"><path d="M0.2 0.5 H6.3 L3.25 3.6 Z" fill="#000"/></svg>
<div class="r" style="left:1286px;top:396.7px;width:69px;height:10px;background:#e7e8eb;border-radius:5px;"></div>
<svg class="s" style="left:1345px;top:400.3px;" width="7" height="4" viewBox="0 0 7 4"><path d="M0.2 0.5 H6.3 L3.25 3.6 Z" fill="#000"/></svg>
<div class="r" style="left:645px;top:408px;width:478px;height:1px;background:repeating-linear-gradient(90deg,#2a6673 0 1px,transparent 1px 2px);"></div>
<div class="r" style="left:1279px;top:408px;width:577px;height:1px;background:repeating-linear-gradient(90deg,#2a6673 0 1px,transparent 1px 2px);"></div>
<div class="t" style="left:648.90px;top:410.63px;font-size:10.6px;line-height:10.6px;color:#555555;transform:scaleX(0.9615);transform-origin:0 0;">NETWORK DESIGN</div>
<div class="r" style="left:1066px;top:410.8px;width:50.5px;height:10px;background:#e7e8eb;border-radius:5px;"></div>
<svg class="s" style="left:1107px;top:414.4px;" width="7" height="4" viewBox="0 0 7 4"><path d="M0.2 0.5 H6.3 L3.25 3.6 Z" fill="#000"/></svg>
<div class="r" style="left:1286px;top:411.7px;width:69px;height:10px;background:#e7e8eb;border-radius:5px;"></div>
<svg class="s" style="left:1345px;top:415.3px;" width="7" height="4" viewBox="0 0 7 4"><path d="M0.2 0.5 H6.3 L3.25 3.6 Z" fill="#000"/></svg>
<div class="t" style="left:648.90px;top:425.63px;font-size:10.6px;line-height:10.6px;color:#555555;transform:scaleX(0.9696);transform-origin:0 0;">ENCRYPTION</div>
<div class="r" style="left:1066px;top:425.8px;width:50.5px;height:10px;background:#e7e8eb;border-radius:5px;"></div>
<svg class="s" style="left:1107px;top:429.4px;" width="7" height="4" viewBox="0 0 7 4"><path d="M0.2 0.5 H6.3 L3.25 3.6 Z" fill="#000"/></svg>
<div class="r" style="left:1286px;top:426.7px;width:69px;height:10px;background:#e7e8eb;border-radius:5px;"></div>
<svg class="s" style="left:1345px;top:430.3px;" width="7" height="4" viewBox="0 0 7 4"><path d="M0.2 0.5 H6.3 L3.25 3.6 Z" fill="#000"/></svg>
<div class="r" style="left:645px;top:438px;width:478px;height:1px;background:repeating-linear-gradient(90deg,#2a6673 0 1px,transparent 1px 2px);"></div>
<div class="r" style="left:1279px;top:438px;width:577px;height:1px;background:repeating-linear-gradient(90deg,#2a6673 0 1px,transparent 1px 2px);"></div>
<div class="t" style="left:648.90px;top:440.53px;font-size:10.6px;line-height:10.6px;color:#555555;transform:scaleX(0.9578);transform-origin:0 0;">BACK UP &amp; RECOVERY</div>
<div class="r" style="left:1066px;top:440.8px;width:50.5px;height:10px;background:#e7e8eb;border-radius:5px;"></div>
<svg class="s" style="left:1107px;top:444.4px;" width="7" height="4" viewBox="0 0 7 4"><path d="M0.2 0.5 H6.3 L3.25 3.6 Z" fill="#000"/></svg>
<div class="r" style="left:1286px;top:441.7px;width:69px;height:10px;background:#e7e8eb;border-radius:5px;"></div>
<svg class="s" style="left:1345px;top:445.3px;" width="7" height="4" viewBox="0 0 7 4"><path d="M0.2 0.5 H6.3 L3.25 3.6 Z" fill="#000"/></svg>
<div class="r" style="left:645px;top:453px;width:478px;height:1px;background:repeating-linear-gradient(90deg,#2a6673 0 1px,transparent 1px 2px);"></div>
<div class="r" style="left:1279px;top:453px;width:577px;height:1px;background:repeating-linear-gradient(90deg,#2a6673 0 1px,transparent 1px 2px);"></div>
<div class="t" style="left:648.90px;top:455.53px;font-size:10.6px;line-height:10.6px;color:#555555;transform:scaleX(0.9882);transform-origin:0 0;">ACCESS CONTROL</div>
<div class="r" style="left:1066px;top:455.8px;width:50.5px;height:10px;background:#e7e8eb;border-radius:5px;"></div>
<svg class="s" style="left:1107px;top:459.4px;" width="7" height="4" viewBox="0 0 7 4"><path d="M0.2 0.5 H6.3 L3.25 3.6 Z" fill="#000"/></svg>
<div class="r" style="left:1286px;top:456.7px;width:69px;height:10px;background:#e7e8eb;border-radius:5px;"></div>
<svg class="s" style="left:1345px;top:460.3px;" width="7" height="4" viewBox="0 0 7 4"><path d="M0.2 0.5 H6.3 L3.25 3.6 Z" fill="#000"/></svg>
<div class="t" style="left:648.90px;top:470.43px;font-size:10.6px;line-height:10.6px;color:#555555;transform:scaleX(0.9630);transform-origin:0 0;">CODE REVIEW</div>
<div class="r" style="left:1066px;top:470.8px;width:50.5px;height:10px;background:#e7e8eb;border-radius:5px;"></div>
<svg class="s" style="left:1107px;top:474.4px;" width="7" height="4" viewBox="0 0 7 4"><path d="M0.2 0.5 H6.3 L3.25 3.6 Z" fill="#000"/></svg>
<div class="r" style="left:1286px;top:471.7px;width:69px;height:10px;background:#e7e8eb;border-radius:5px;"></div>
<svg class="s" style="left:1345px;top:475.3px;" width="7" height="4" viewBox="0 0 7 4"><path d="M0.2 0.5 H6.3 L3.25 3.6 Z" fill="#000"/></svg>
<div class="r" style="left:645px;top:483px;width:478px;height:1px;background:repeating-linear-gradient(90deg,#2a6673 0 1px,transparent 1px 2px);"></div>
<div class="r" style="left:1279px;top:483px;width:577px;height:1px;background:repeating-linear-gradient(90deg,#2a6673 0 1px,transparent 1px 2px);"></div>
<div class="t" style="left:648.90px;top:485.43px;font-size:10.6px;line-height:10.6px;color:#555555;transform:scaleX(0.9600);transform-origin:0 0;">TESTING</div>
<div class="r" style="left:1066px;top:485.8px;width:50.5px;height:10px;background:#e7e8eb;border-radius:5px;"></div>
<svg class="s" style="left:1107px;top:489.4px;" width="7" height="4" viewBox="0 0 7 4"><path d="M0.2 0.5 H6.3 L3.25 3.6 Z" fill="#000"/></svg>
<div class="r" style="left:1286px;top:486.7px;width:69px;height:10px;background:#e7e8eb;border-radius:5px;"></div>
<svg class="s" style="left:1345px;top:490.3px;" width="7" height="4" viewBox="0 0 7 4"><path d="M0.2 0.5 H6.3 L3.25 3.6 Z" fill="#000"/></svg>
<div class="r" style="left:645px;top:498px;width:478px;height:1px;background:repeating-linear-gradient(90deg,#2a6673 0 1px,transparent 1px 2px);"></div>
<div class="r" style="left:1279px;top:498px;width:577px;height:1px;background:repeating-linear-gradient(90deg,#2a6673 0 1px,transparent 1px 2px);"></div>
<div class="t" style="left:648.90px;top:500.43px;font-size:10.6px;line-height:10.6px;color:#555555;transform:scaleX(0.9695);transform-origin:0 0;">AUDITING</div>
<div class="r" style="left:1066px;top:501.3px;width:50.5px;height:10px;background:#e7e8eb;border-radius:5px;"></div>
<svg class="s" style="left:1107px;top:504.9px;" width="7" height="4" viewBox="0 0 7 4"><path d="M0.2 0.5 H6.3 L3.25 3.6 Z" fill="#000"/></svg>
<div class="r" style="left:1286px;top:502.7px;width:69px;height:10px;background:#e7e8eb;border-radius:5px;"></div>
<svg class="s" style="left:1345px;top:506.3px;" width="7" height="4" viewBox="0 0 7 4"><path d="M0.2 0.5 H6.3 L3.25 3.6 Z" fill="#000"/></svg>
<div class="r" style="left:645px;top:380px;width:1px;height:134px;background:repeating-linear-gradient(180deg,#2a6673 0 1px,transparent 1px 2px);"></div>
<div class="r" style="left:771px;top:380px;width:1px;height:134px;background:repeating-linear-gradient(180deg,#2a6673 0 1px,transparent 1px 2px);"></div>
<div class="r" style="left:1059px;top:380px;width:1px;height:134px;background:repeating-linear-gradient(180deg,#2a6673 0 1px,transparent 1px 2px);"></div>
<div class="r" style="left:1122px;top:380px;width:1px;height:134px;background:repeating-linear-gradient(180deg,#2a6673 0 1px,transparent 1px 2px);"></div>
<div class="r" style="left:1279px;top:380px;width:1px;height:134px;background:repeating-linear-gradient(180deg,#2a6673 0 1px,transparent 1px 2px);"></div>
<div class="r" style="left:1360px;top:380px;width:1px;height:134px;background:repeating-linear-gradient(180deg,#2a6673 0 1px,transparent 1px 2px);"></div>
<div class="r" style="left:1549px;top:380px;width:1px;height:134px;background:repeating-linear-gradient(180deg,#2a6673 0 1px,transparent 1px 2px);"></div>
<div class="r" style="left:1740px;top:380px;width:1px;height:134px;background:repeating-linear-gradient(180deg,#2a6673 0 1px,transparent 1px 2px);"></div>
<div class="r" style="left:460px;top:380px;width:1396px;height:1px;background:#134f5c;"></div>
<div class="r" style="left:460px;top:514px;width:1396px;height:1px;background:#134f5c;"></div>
<div class="r" style="left:50px;top:527px;width:280px;height:195px;background:#0c343d;"></div>
<div class="t" style="left:116.00px;top:609.99px;font-size:26px;line-height:26px;color:#eef2f3;transform:scaleX(0.9075);transform-origin:0 0;">SCALABILITY</div>
<div class="r" style="left:330px;top:527px;width:130px;height:55px;background:#134f5c;"></div>
<div class="t" style="left:332.90px;top:540.94px;font-size:13.3px;line-height:13.3px;color:#ffffff;transform:scaleX(0.9058);transform-origin:0 0;">TRANSACTIONS PER</div>
<div class="t" style="left:332.90px;top:555.04px;font-size:13.3px;line-height:13.3px;color:#ffffff;transform:scaleX(0.9332);transform-origin:0 0;">SECOND</div>
<div class="r" style="left:1122px;top:527px;width:157px;height:55px;background:#ea9999;"></div>
<div class="t" style="left:1185.90px;top:563.50px;font-size:16.3px;line-height:16.3px;color:#125566;transform:scaleX(0.8559);transform-origin:0 0;">0.0%</div>
<div class="r" style="left:330px;top:582px;width:130px;height:69px;background:#45818e;"></div>
<div class="t" style="left:332.90px;top:610.14px;font-size:13.3px;line-height:13.3px;color:#ffffff;transform:scaleX(0.9177);transform-origin:0 0;">BLOCK SIZE</div>
<div class="r" style="left:1122px;top:582px;width:157px;height:69px;background:#ea9999;"></div>
<div class="t" style="left:1185.90px;top:631.90px;font-size:16.3px;line-height:16.3px;color:#125566;transform:scaleX(0.8559);transform-origin:0 0;">0.0%</div>
<div class="r" style="left:460px;top:582px;width:1396px;height:1px;background:repeating-linear-gradient(90deg,#2a6673 0 1px,transparent 1px 2px);"></div>
<div class="r" style="left:330px;top:582px;width:129px;height:1px;background:repeating-linear-gradient(90deg,#a6c4ca 0 1px,transparent 1px 2px);"></div>
<div class="r" style="left:330px;top:582px;width:1px;height:69px;background:repeating-linear-gradient(180deg,#a6c4ca 0 1px,transparent 1px 2px);"></div>
<div class="r" style="left:330px;top:651px;width:130px;height:71px;background:#76a5af;"></div>
<div class="t" style="left:332.90px;top:680.24px;font-size:13.3px;line-height:13.3px;color:#ffffff;transform:scaleX(0.9172);transform-origin:0 0;">NETWORK LATENCY</div>
<div class="r" style="left:1122px;top:651px;width:157px;height:70px;background:#ea9999;"></div>
<div class="t" style="left:1185.90px;top:701.00px;font-size:16.3px;line-height:16.3px;color:#125566;transform:scaleX(0.8559);transform-origin:0 0;">0.0%</div>
<div class="r" style="left:460px;top:651px;width:1396px;height:1px;background:repeating-linear-gradient(90deg,#2a6673 0 1px,transparent 1px 2px);"></div>
<div class="r" style="left:330px;top:527px;width:1px;height:55px;background:repeating-linear-gradient(180deg,#5b94a0 0 1px,transparent 1px 2px);"></div>
<div class="t" style="left:648.90px;top:530.13px;font-size:9.3px;line-height:9.3px;color:#555555;transform:scaleX(0.9259);transform-origin:0 0;">LOAD TESTING</div>
<div class="r" style="left:1066px;top:528.8px;width:50.5px;height:10px;background:#e7e8eb;border-radius:5px;"></div>
<svg class="s" style="left:1107px;top:532.4px;" width="7" height="4" viewBox="0 0 7 4"><path d="M0.2 0.5 H6.3 L3.25 3.6 Z" fill="#000"/></svg>
<div class="r" style="left:1286px;top:528.7px;width:69px;height:10px;background:#e7e8eb;border-radius:5px;"></div>
<svg class="s" style="left:1345px;top:532.3px;" width="7" height="4" viewBox="0 0 7 4"><path d="M0.2 0.5 H6.3 L3.25 3.6 Z" fill="#000"/></svg>
<div class="r" style="left:645px;top:540px;width:478px;height:1px;background:repeating-linear-gradient(90deg,#2a6673 0 1px,transparent 1px 2px);"></div>
<div class="r" style="left:1279px;top:540px;width:577px;height:1px;background:repeating-linear-gradient(90deg,#2a6673 0 1px,transparent 1px 2px);"></div>
<div class="t" style="left:648.90px;top:543.13px;font-size:10.6px;line-height:10.6px;color:#555555;transform:scaleX(0.9581);transform-origin:0 0;">PERFORMANCE</div>
<div class="t" style="left:648.90px;top:554.83px;font-size:10.6px;line-height:10.6px;color:#555555;transform:scaleX(1.0243);transform-origin:0 0;">OPTIMIZATION</div>
<div class="r" style="left:1066px;top:548.8px;width:50.5px;height:10px;background:#e7e8eb;border-radius:5px;"></div>
<svg class="s" style="left:1107px;top:552.4px;" width="7" height="4" viewBox="0 0 7 4"><path d="M0.2 0.5 H6.3 L3.25 3.6 Z" fill="#000"/></svg>
<div class="r" style="left:1286px;top:555.7px;width:69px;height:10px;background:#e7e8eb;border-radius:5px;"></div>
<svg class="s" style="left:1345px;top:559.3px;" width="7" height="4" viewBox="0 0 7 4"><path d="M0.2 0.5 H6.3 L3.25 3.6 Z" fill="#000"/></svg>
<div class="r" style="left:645px;top:567px;width:478px;height:1px;background:repeating-linear-gradient(90deg,#2a6673 0 1px,transparent 1px 2px);"></div>
<div class="r" style="left:1279px;top:567px;width:577px;height:1px;background:repeating-linear-gradient(90deg,#2a6673 0 1px,transparent 1px 2px);"></div>
<div class="t" style="left:648.90px;top:569.83px;font-size:10.6px;line-height:10.6px;color:#555555;transform:scaleX(0.9526);transform-origin:0 0;">SHARDING</div>
<div class="r" style="left:1066px;top:569.8px;width:50.5px;height:10px;background:#e7e8eb;border-radius:5px;"></div>
<svg class="s" style="left:1107px;top:573.4px;" width="7" height="4" viewBox="0 0 7 4"><path d="M0.2 0.5 H6.3 L3.25 3.6 Z" fill="#000"/></svg>
<div class="r" style="left:1286px;top:570.7px;width:69px;height:10px;background:#e7e8eb;border-radius:5px;"></div>
<svg class="s" style="left:1345px;top:574.3px;" width="7" height="4" viewBox="0 0 7 4"><path d="M0.2 0.5 H6.3 L3.25 3.6 Z" fill="#000"/></svg>
<div class="t" style="left:648.90px;top:584.73px;font-size:10.6px;line-height:10.6px;color:#555555;transform:scaleX(0.9737);transform-origin:0 0;">BLOCK SIZE</div>
<div class="t" style="left:648.90px;top:596.53px;font-size:10.6px;line-height:10.6px;color:#555555;transform:scaleX(1.0206);transform-origin:0 0;">LIMITATION</div>
<div class="r" style="left:1066px;top:590.8px;width:50.5px;height:10px;background:#e7e8eb;border-radius:5px;"></div>
<svg class="s" style="left:1107px;top:594.4px;" width="7" height="4" viewBox="0 0 7 4"><path d="M0.2 0.5 H6.3 L3.25 3.6 Z" fill="#000"/></svg>
<div class="r" style="left:1286px;top:597.7px;width:69px;height:10px;background:#e7e8eb;border-radius:5px;"></div>
<svg class="s" style="left:1345px;top:601.3px;" width="7" height="4" viewBox="0 0 7 4"><path d="M0.2 0.5 H6.3 L3.25 3.6 Z" fill="#000"/></svg>
<div class="r" style="left:645px;top:609px;width:478px;height:1px;background:repeating-linear-gradient(90deg,#2a6673 0 1px,transparent 1px 2px);"></div>
<div class="r" style="left:1279px;top:609px;width:577px;height:1px;background:repeating-linear-gradient(90deg,#2a6673 0 1px,transparent 1px 2px);"></div>
<div class="t" style="left:648.90px;top:611.93px;font-size:10.6px;line-height:10.6px;color:#555555;transform:scaleX(0.9737);transform-origin:0 0;">BLOCK SIZE</div>
<div class="t" style="left:648.90px;top:623.73px;font-size:10.6px;line-height:10.6px;color:#555555;transform:scaleX(1.0243);transform-origin:0 0;">OPTIMIZATION</div>
<div class="r" style="left:1066px;top:617.8px;width:50.5px;height:10px;background:#e7e8eb;border-radius:5px;"></div>
<svg class="s" style="left:1107px;top:621.4px;" width="7" height="4" viewBox="0 0 7 4"><path d="M0.2 0.5 H6.3 L3.25 3.6 Z" fill="#000"/></svg>
<div class="r" style="left:1286px;top:624.7px;width:69px;height:10px;background:#e7e8eb;border-radius:5px;"></div>
<svg class="s" style="left:1345px;top:628.3px;" width="7" height="4" viewBox="0 0 7 4"><path d="M0.2 0.5 H6.3 L3.25 3.6 Z" fill="#000"/></svg>
<div class="r" style="left:645px;top:636px;width:478px;height:1px;background:repeating-linear-gradient(90deg,#2a6673 0 1px,transparent 1px 2px);"></div>
<div class="r" style="left:1279px;top:636px;width:577px;height:1px;background:repeating-linear-gradient(90deg,#2a6673 0 1px,transparent 1px 2px);"></div>
<div class="t" style="left:648.90px;top:638.83px;font-size:10.6px;line-height:10.6px;color:#555555;transform:scaleX(0.9751);transform-origin:0 0;">BLOCK INTERVAL</div>
<div class="r" style="left:1066px;top:638.8px;width:50.5px;height:10px;background:#e7e8eb;border-radius:5px;"></div>
<svg class="s" style="left:1107px;top:642.4px;" width="7" height="4" viewBox="0 0 7 4"><path d="M0.2 0.5 H6.3 L3.25 3.6 Z" fill="#000"/></svg>
<div class="r" style="left:1286px;top:639.7px;width:69px;height:10px;background:#e7e8eb;border-radius:5px;"></div>
<svg class="s" style="left:1345px;top:643.3px;" width="7" height="4" viewBox="0 0 7 4"><path d="M0.2 0.5 H6.3 L3.25 3.6 Z" fill="#000"/></svg>
<div class="t" style="left:648.90px;top:653.63px;font-size:10.6px;line-height:10.6px;color:#555555;transform:scaleX(0.9615);transform-origin:0 0;">NETWORK DESIGN</div>
<div class="r" style="left:1066px;top:653.8px;width:50.5px;height:10px;background:#e7e8eb;border-radius:5px;"></div>
<svg class="s" style="left:1107px;top:657.4px;" width="7" height="4" viewBox="0 0 7 4"><path d="M0.2 0.5 H6.3 L3.25 3.6 Z" fill="#000"/></svg>
<div class="r" style="left:1286px;top:654.7px;width:69px;height:10px;background:#e7e8eb;border-radius:5px;"></div>
<svg class="s" style="left:1345px;top:658.3px;" width="7" height="4" viewBox="0 0 7 4"><path d="M0.2 0.5 H6.3 L3.25 3.6 Z" fill="#000"/></svg>
<div class="r" style="left:645px;top:666px;width:478px;height:1px;background:repeating-linear-gradient(90deg,#2a6673 0 1px,transparent 1px 2px);"></div>
<div class="r" style="left:1279px;top:666px;width:577px;height:1px;background:repeating-linear-gradient(90deg,#2a6673 0 1px,transparent 1px 2px);"></div>
<div class="t" style="left:648.90px;top:668.83px;font-size:10.6px;line-height:10.6px;color:#555555;transform:scaleX(0.9451);transform-origin:0 0;">NETWORK</div>
<div class="t" style="left:648.90px;top:680.53px;font-size:10.6px;line-height:10.6px;color:#555555;transform:scaleX(1.0243);transform-origin:0 0;">OPTIMIZATION</div>
<div class="r" style="left:1066px;top:674.8px;width:50.5px;height:10px;background:#e7e8eb;border-radius:5px;"></div>
<svg class="s" style="left:1107px;top:678.4px;" width="7" height="4" viewBox="0 0 7 4"><path d="M0.2 0.5 H6.3 L3.25 3.6 Z" fill="#000"/></svg>
<div class="r" style="left:1286px;top:681.7px;width:69px;height:10px;background:#e7e8eb;border-radius:5px;"></div>
<svg class="s" style="left:1345px;top:685.3px;" width="7" height="4" viewBox="0 0 7 4"><path d="M0.2 0.5 H6.3 L3.25 3.6 Z" fill="#000"/></svg>
<div class="r" style="left:645px;top:693px;width:478px;height:1px;background:repeating-linear-gradient(90deg,#2a6673 0 1px,transparent 1px 2px);"></div>
<div class="r" style="left:1279px;top:693px;width:577px;height:1px;background:repeating-linear-gradient(90deg,#2a6673 0 1px,transparent 1px 2px);"></div>
<div class="t" style="left:648.90px;top:695.93px;font-size:10.6px;line-height:10.6px;color:#555555;transform:scaleX(0.9451);transform-origin:0 0;">NETWORK</div>
<div class="t" style="left:648.90px;top:707.23px;font-size:10.6px;line-height:10.6px;color:#555555;transform:scaleX(1.0043);transform-origin:0 0;">MONITORING</div>
<div class="r" style="left:1066px;top:702.3px;width:50.5px;height:10px;background:#e7e8eb;border-radius:5px;"></div>
<svg class="s" style="left:1107px;top:705.9px;" width="7" height="4" viewBox="0 0 7 4"><path d="M0.2 0.5 H6.3 L3.25 3.6 Z" fill="#000"/></svg>
<div class="r" style="left:1286px;top:709.7px;width:69px;height:10px;background:#e7e8eb;border-radius:5px;"></div>
<svg class="s" style="left:1345px;top:713.3px;" width="7" height="4" viewBox="0 0 7 4"><path d="M0.2 0.5 H6.3 L3.25 3.6 Z" fill="#000"/></svg>
<div class="r" style="left:645px;top:527px;width:1px;height:194px;background:repeating-linear-gradient(180deg,#2a6673 0 1px,transparent 1px 2px);"></div>
<div class="r" style="left:771px;top:527px;width:1px;height:194px;background:repeating-linear-gradient(180deg,#2a6673 0 1px,transparent 1px 2px);"></div>
<div class="r" style="left:1059px;top:527px;width:1px;height:194px;background:repeating-linear-gradient(180deg,#2a6673 0 1px,transparent 1px 2px);"></div>
<div class="r" style="left:1122px;top:527px;width:1px;height:194px;background:repeating-linear-gradient(180deg,#2a6673 0 1px,transparent 1px 2px);"></div>
<div class="r" style="left:1279px;top:527px;width:1px;height:194px;background:repeating-linear-gradient(180deg,#2a6673 0 1px,transparent 1px 2px);"></div>
<div class="r" style="left:1360px;top:527px;width:1px;height:194px;background:repeating-linear-gradient(180deg,#2a6673 0 1px,transparent 1px 2px);"></div>
<div class="r" style="left:1549px;top:527px;width:1px;height:194px;background:repeating-linear-gradient(180deg,#2a6673 0 1px,transparent 1px 2px);"></div>
<div class="r" style="left:1740px;top:527px;width:1px;height:194px;background:repeating-linear-gradient(180deg,#2a6673 0 1px,transparent 1px 2px);"></div>
<div class="r" style="left:460px;top:527px;width:1396px;height:1px;background:#134f5c;"></div>
<div class="r" style="left:460px;top:721px;width:1396px;height:1px;background:#134f5c;"></div>
<div class="r" style="left:50px;top:734px;width:280px;height:173px;background:#0c343d;"></div>
<div class="t" style="left:71.30px;top:805.89px;font-size:26px;line-height:26px;color:#eef2f3;transform:scaleX(0.9233);transform-origin:0 0;">DECENTRALIZATION</div>
<div class="r" style="left:330px;top:734px;width:130px;height:45px;background:#134f5c;"></div>
<div class="t" style="left:332.90px;top:742.94px;font-size:13.3px;line-height:13.3px;color:#ffffff;transform:scaleX(0.9275);transform-origin:0 0;">DISTRIBUTION OF</div>
<div class="t" style="left:332.90px;top:756.84px;font-size:13.3px;line-height:13.3px;color:#ffffff;transform:scaleX(0.9958);transform-origin:0 0;">NODES</div>
<div class="r" style="left:1122px;top:734px;width:157px;height:45px;background:#ea9999;"></div>
<div class="t" style="left:1185.90px;top:760.30px;font-size:16.3px;line-height:16.3px;color:#125566;transform:scaleX(0.8559);transform-origin:0 0;">0.0%</div>
<div class="r" style="left:330px;top:779px;width:130px;height:81px;background:#45818e;"></div>
<div class="t" style="left:332.90px;top:807.14px;font-size:13.3px;line-height:13.3px;color:#ffffff;transform:scaleX(0.9424);transform-origin:0 0;">CONSENSUS</div>
<div class="t" style="left:332.90px;top:819.94px;font-size:13.3px;line-height:13.3px;color:#ffffff;transform:scaleX(0.9633);transform-origin:0 0;">MECHANISM</div>
<div class="r" style="left:1122px;top:779px;width:157px;height:81px;background:#ea9999;"></div>
<div class="t" style="left:1185.90px;top:841.70px;font-size:16.3px;line-height:16.3px;color:#125566;transform:scaleX(0.8559);transform-origin:0 0;">0.0%</div>
<div class="r" style="left:460px;top:779px;width:1396px;height:1px;background:repeating-linear-gradient(90deg,#2a6673 0 1px,transparent 1px 2px);"></div>
<div class="r" style="left:330px;top:779px;width:129px;height:1px;background:repeating-linear-gradient(90deg,#a6c4ca 0 1px,transparent 1px 2px);"></div>
<div class="r" style="left:330px;top:779px;width:1px;height:81px;background:repeating-linear-gradient(180deg,#a6c4ca 0 1px,transparent 1px 2px);"></div>
<div class="r" style="left:330px;top:860px;width:130px;height:47px;background:#76a5af;"></div>
<div class="t" style="left:332.90px;top:876.84px;font-size:13.3px;line-height:13.3px;color:#ffffff;transform:scaleX(0.9131);transform-origin:0 0;">ENCRYPTION</div>
<div class="r" style="left:1122px;top:860px;width:157px;height:46px;background:#ea9999;"></div>
<div class="t" style="left:1185.90px;top:886.30px;font-size:16.3px;line-height:16.3px;color:#125566;transform:scaleX(0.8559);transform-origin:0 0;">0.0%</div>
<div class="r" style="left:460px;top:860px;width:1396px;height:1px;background:repeating-linear-gradient(90deg,#2a6673 0 1px,transparent 1px 2px);"></div>
<div class="r" style="left:330px;top:734px;width:1px;height:45px;background:repeating-linear-gradient(180deg,#5b94a0 0 1px,transparent 1px 2px);"></div>
<div class="t" style="left:648.90px;top:736.73px;font-size:10.6px;line-height:10.6px;color:#555555;transform:scaleX(0.9673);transform-origin:0 0;">NODE DIVERSITY</div>
<div class="r" style="left:1066px;top:736.8px;width:50.5px;height:10px;background:#e7e8eb;border-radius:5px;"></div>
<svg class="s" style="left:1107px;top:740.4px;" width="7" height="4" viewBox="0 0 7 4"><path d="M0.2 0.5 H6.3 L3.25 3.6 Z" fill="#000"/></svg>
<div class="r" style="left:1286px;top:737.7px;width:69px;height:10px;background:#e7e8eb;border-radius:5px;"></div>
<svg class="s" style="left:1345px;top:741.3px;" width="7" height="4" viewBox="0 0 7 4"><path d="M0.2 0.5 H6.3 L3.25 3.6 Z" fill="#000"/></svg>
<div class="r" style="left:645px;top:749px;width:478px;height:1px;background:repeating-linear-gradient(90deg,#2a6673 0 1px,transparent 1px 2px);"></div>
<div class="r" style="left:1279px;top:749px;width:577px;height:1px;background:repeating-linear-gradient(90deg,#2a6673 0 1px,transparent 1px 2px);"></div>
<div class="t" style="left:648.90px;top:751.73px;font-size:10.6px;line-height:10.6px;color:#555555;transform:scaleX(1.0053);transform-origin:0 0;">NODE INCENTIVES</div>
<div class="r" style="left:1066px;top:751.8px;width:50.5px;height:10px;background:#e7e8eb;border-radius:5px;"></div>
<svg class="s" style="left:1107px;top:755.4px;" width="7" height="4" viewBox="0 0 7 4"><path d="M0.2 0.5 H6.3 L3.25 3.6 Z" fill="#000"/></svg>
<div class="r" style="left:1286px;top:752.7px;width:69px;height:10px;background:#e7e8eb;border-radius:5px;"></div>
<svg class="s" style="left:1345px;top:756.3px;" width="7" height="4" viewBox="0 0 7 4"><path d="M0.2 0.5 H6.3 L3.25 3.6 Z" fill="#000"/></svg>
<div class="r" style="left:645px;top:764px;width:478px;height:1px;background:repeating-linear-gradient(90deg,#2a6673 0 1px,transparent 1px 2px);"></div>
<div class="r" style="left:1279px;top:764px;width:577px;height:1px;background:repeating-linear-gradient(90deg,#2a6673 0 1px,transparent 1px 2px);"></div>
<div class="t" style="left:648.90px;top:766.93px;font-size:10.6px;line-height:10.6px;color:#555555;transform:scaleX(0.9921);transform-origin:0 0;">NODE DISTRIBUTION</div>
<div class="r" style="left:1066px;top:766.8px;width:50.5px;height:10px;background:#e7e8eb;border-radius:5px;"></div>
<svg class="s" style="left:1107px;top:770.4px;" width="7" height="4" viewBox="0 0 7 4"><path d="M0.2 0.5 H6.3 L3.25 3.6 Z" fill="#000"/></svg>
<div class="r" style="left:1286px;top:767.7px;width:69px;height:10px;background:#e7e8eb;border-radius:5px;"></div>
<svg class="s" style="left:1345px;top:771.3px;" width="7" height="4" viewBox="0 0 7 4"><path d="M0.2 0.5 H6.3 L3.25 3.6 Z" fill="#000"/></svg>
<div class="t" style="left:648.90px;top:782.13px;font-size:10.6px;line-height:10.6px;color:#555555;transform:scaleX(0.9978);transform-origin:0 0;">CONSENSUS</div>
<div class="t" style="left:648.90px;top:793.83px;font-size:10.6px;line-height:10.6px;color:#555555;transform:scaleX(0.9775);transform-origin:0 0;">ALGORITHM</div>
<div class="r" style="left:1066px;top:787.8px;width:50.5px;height:10px;background:#e7e8eb;border-radius:5px;"></div>
<svg class="s" style="left:1107px;top:791.4px;" width="7" height="4" viewBox="0 0 7 4"><path d="M0.2 0.5 H6.3 L3.25 3.6 Z" fill="#000"/></svg>
<div class="r" style="left:1286px;top:794.7px;width:69px;height:10px;background:#e7e8eb;border-radius:5px;"></div>
<svg class="s" style="left:1345px;top:798.3px;" width="7" height="4" viewBox="0 0 7 4"><path d="M0.2 0.5 H6.3 L3.25 3.6 Z" fill="#000"/></svg>
<div class="r" style="left:645px;top:806px;width:478px;height:1px;background:repeating-linear-gradient(90deg,#2a6673 0 1px,transparent 1px 2px);"></div>
<div class="r" style="left:1279px;top:806px;width:577px;height:1px;background:repeating-linear-gradient(90deg,#2a6673 0 1px,transparent 1px 2px);"></div>
<div class="t" style="left:648.90px;top:809.03px;font-size:10.6px;line-height:10.6px;color:#555555;transform:scaleX(0.9978);transform-origin:0 0;">CONSENSUS</div>
<div class="t" style="left:648.90px;top:820.83px;font-size:10.6px;line-height:10.6px;color:#555555;transform:scaleX(0.9917);transform-origin:0 0;">CONFIGURATION</div>
<div class="r" style="left:1066px;top:814.8px;width:50.5px;height:10px;background:#e7e8eb;border-radius:5px;"></div>
<svg class="s" style="left:1107px;top:818.4px;" width="7" height="4" viewBox="0 0 7 4"><path d="M0.2 0.5 H6.3 L3.25 3.6 Z" fill="#000"/></svg>
<div class="r" style="left:1286px;top:821.7px;width:69px;height:10px;background:#e7e8eb;border-radius:5px;"></div>
<svg class="s" style="left:1345px;top:825.3px;" width="7" height="4" viewBox="0 0 7 4"><path d="M0.2 0.5 H6.3 L3.25 3.6 Z" fill="#000"/></svg>
<div class="r" style="left:645px;top:833px;width:478px;height:1px;background:repeating-linear-gradient(90deg,#2a6673 0 1px,transparent 1px 2px);"></div>
<div class="r" style="left:1279px;top:833px;width:577px;height:1px;background:repeating-linear-gradient(90deg,#2a6673 0 1px,transparent 1px 2px);"></div>
<div class="t" style="left:648.90px;top:836.03px;font-size:10.6px;line-height:10.6px;color:#555555;transform:scaleX(0.9978);transform-origin:0 0;">CONSENSUS</div>
<div class="t" style="left:648.90px;top:847.83px;font-size:10.6px;line-height:10.6px;color:#555555;transform:scaleX(1.0043);transform-origin:0 0;">MONITORING</div>
<div class="r" style="left:1066px;top:841.8px;width:50.5px;height:10px;background:#e7e8eb;border-radius:5px;"></div>
<svg class="s" style="left:1107px;top:845.4px;" width="7" height="4" viewBox="0 0 7 4"><path d="M0.2 0.5 H6.3 L3.25 3.6 Z" fill="#000"/></svg>
<div class="r" style="left:1286px;top:848.7px;width:69px;height:10px;background:#e7e8eb;border-radius:5px;"></div>
<svg class="s" style="left:1345px;top:852.3px;" width="7" height="4" viewBox="0 0 7 4"><path d="M0.2 0.5 H6.3 L3.25 3.6 Z" fill="#000"/></svg>
<div class="t" style="left:648.90px;top:863.03px;font-size:10.6px;line-height:10.6px;color:#555555;transform:scaleX(0.9959);transform-origin:0 0;">ROLE DEFINITION</div>
<div class="r" style="left:1066px;top:862.8px;width:50.5px;height:10px;background:#e7e8eb;border-radius:5px;"></div>
<svg class="s" style="left:1107px;top:866.4px;" width="7" height="4" viewBox="0 0 7 4"><path d="M0.2 0.5 H6.3 L3.25 3.6 Z" fill="#000"/></svg>
<div class="r" style="left:1286px;top:863.7px;width:69px;height:10px;background:#e7e8eb;border-radius:5px;"></div>
<svg class="s" style="left:1345px;top:867.3px;" width="7" height="4" viewBox="0 0 7 4"><path d="M0.2 0.5 H6.3 L3.25 3.6 Z" fill="#000"/></svg>
<div class="r" style="left:645px;top:875px;width:478px;height:1px;background:repeating-linear-gradient(90deg,#2a6673 0 1px,transparent 1px 2px);"></div>
<div class="r" style="left:1279px;top:875px;width:577px;height:1px;background:repeating-linear-gradient(90deg,#2a6673 0 1px,transparent 1px 2px);"></div>
<div class="t" style="left:648.90px;top:878.23px;font-size:10.6px;line-height:10.6px;color:#555555;transform:scaleX(0.9969);transform-origin:0 0;">DECISION MAKING</div>
<div class="r" style="left:1066px;top:877.8px;width:50.5px;height:10px;background:#e7e8eb;border-radius:5px;"></div>
<svg class="s" style="left:1107px;top:881.4px;" width="7" height="4" viewBox="0 0 7 4"><path d="M0.2 0.5 H6.3 L3.25 3.6 Z" fill="#000"/></svg>
<div class="r" style="left:1286px;top:878.7px;width:69px;height:10px;background:#e7e8eb;border-radius:5px;"></div>
<svg class="s" style="left:1345px;top:882.3px;" width="7" height="4" viewBox="0 0 7 4"><path d="M0.2 0.5 H6.3 L3.25 3.6 Z" fill="#000"/></svg>
<div class="r" style="left:645px;top:890px;width:478px;height:1px;background:repeating-linear-gradient(90deg,#2a6673 0 1px,transparent 1px 2px);"></div>
<div class="r" style="left:1279px;top:890px;width:577px;height:1px;background:repeating-linear-gradient(90deg,#2a6673 0 1px,transparent 1px 2px);"></div>
<div class="t" style="left:648.90px;top:892.93px;font-size:10.6px;line-height:10.6px;color:#555555;transform:scaleX(0.9566);transform-origin:0 0;">VOTING RIGHTS</div>
<div class="r" style="left:1066px;top:893.3px;width:50.5px;height:10px;background:#e7e8eb;border-radius:5px;"></div>
<svg class="s" style="left:1107px;top:896.9px;" width="7" height="4" viewBox="0 0 7 4"><path d="M0.2 0.5 H6.3 L3.25 3.6 Z" fill="#000"/></svg>
<div class="r" style="left:1286px;top:894.7px;width:69px;height:10px;background:#e7e8eb;border-radius:5px;"></div>
<svg class="s" style="left:1345px;top:898.3px;" width="7" height="4" viewBox="0 0 7 4"><path d="M0.2 0.5 H6.3 L3.25 3.6 Z" fill="#000"/></svg>
<div class="r" style="left:645px;top:734px;width:1px;height:172px;background:repeating-linear-gradient(180deg,#2a6673 0 1px,transparent 1px 2px);"></div>
<div class="r" style="left:771px;top:734px;width:1px;height:172px;background:repeating-linear-gradient(180deg,#2a6673 0 1px,transparent 1px 2px);"></div>
<div class="r" style="left:1059px;top:734px;width:1px;height:172px;background:repeating-linear-gradient(180deg,#2a6673 0 1px,transparent 1px 2px);"></div>
<div class="r" style="left:1122px;top:734px;width:1px;height:172px;background:repeating-linear-gradient(180deg,#2a6673 0 1px,transparent 1px 2px);"></div>
<div class="r" style="left:1279px;top:734px;width:1px;height:172px;background:repeating-linear-gradient(180deg,#2a6673 0 1px,transparent 1px 2px);"></div>
<div class="r" style="left:1360px;top:734px;width:1px;height:172px;background:repeating-linear-gradient(180deg,#2a6673 0 1px,transparent 1px 2px);"></div>
<div class="r" style="left:1549px;top:734px;width:1px;height:172px;background:repeating-linear-gradient(180deg,#2a6673 0 1px,transparent 1px 2px);"></div>
<div class="r" style="left:1740px;top:734px;width:1px;height:172px;background:repeating-linear-gradient(180deg,#2a6673 0 1px,transparent 1px 2px);"></div>
<div class="r" style="left:460px;top:734px;width:1396px;height:1px;background:#134f5c;"></div>
<div class="r" style="left:460px;top:906px;width:1396px;height:1px;background:#134f5c;"></div>
<div class="r" style="left:50px;top:919px;width:280px;height:38px;background:#0c343d;"></div>
<div class="r" style="left:330px;top:919px;width:130px;height:38px;background:#134f5c;"></div>
<div class="r" style="left:330px;top:919px;width:1px;height:38px;background:repeating-linear-gradient(180deg,#5b94a0 0 1px,transparent 1px 2px);"></div>
<div class="t" style="left:332.90px;top:938.94px;font-size:13.3px;line-height:13.3px;color:#ffffff;transform:scaleX(0.8968);transform-origin:0 0;">INTEROPERABILITY</div>
<div class="t" style="left:332.90px;top:952.64px;font-size:13.3px;line-height:13.3px;color:#ffffff;transform:scaleX(0.9261);transform-origin:0 0;">WITH OTHER</div>
<div class="r" style="left:1122px;top:919px;width:157px;height:38px;background:#ea9999;"></div>
<div class="t" style="left:648.90px;top:921.83px;font-size:10.6px;line-height:10.6px;color:#555555;transform:scaleX(0.9682);transform-origin:0 0;">INTEROPERABILLITY</div>
<div class="t" style="left:648.90px;top:933.53px;font-size:10.6px;line-height:10.6px;color:#555555;transform:scaleX(0.9351);transform-origin:0 0;">STANDARDS</div>
<div class="t" style="left:648.90px;top:949.63px;font-size:10.6px;line-height:10.6px;color:#555555;transform:scaleX(0.8997);transform-origin:0 0;">PROTCOL</div>
<div class="r" style="left:1066px;top:927.8px;width:50.5px;height:10px;background:#e7e8eb;border-radius:5px;"></div>
<svg class="s" style="left:1107px;top:931.4px;" width="7" height="4" viewBox="0 0 7 4"><path d="M0.2 0.5 H6.3 L3.25 3.6 Z" fill="#000"/></svg>
<div class="r" style="left:1286px;top:934.7px;width:69px;height:10px;background:#e7e8eb;border-radius:5px;"></div>
<svg class="s" style="left:1345px;top:938.3px;" width="7" height="4" viewBox="0 0 7 4"><path d="M0.2 0.5 H6.3 L3.25 3.6 Z" fill="#000"/></svg>
<div class="r" style="left:1066px;top:954.8px;width:50.5px;height:10px;background:#e7e8eb;border-radius:5px;"></div>
<svg class="s" style="left:1107px;top:958.4px;" width="7" height="4" viewBox="0 0 7 4"><path d="M0.2 0.5 H6.3 L3.25 3.6 Z" fill="#000"/></svg>
<div class="r" style="left:645px;top:946px;width:478px;height:1px;background:repeating-linear-gradient(90deg,#2a6673 0 1px,transparent 1px 2px);"></div>
<div class="r" style="left:1279px;top:946px;width:577px;height:1px;background:repeating-linear-gradient(90deg,#2a6673 0 1px,transparent 1px 2px);"></div>
<div class="r" style="left:645px;top:919px;width:1px;height:38px;background:repeating-linear-gradient(180deg,#2a6673 0 1px,transparent 1px 2px);"></div>
<div class="r" style="left:771px;top:919px;width:1px;height:38px;background:repeating-linear-gradient(180deg,#2a6673 0 1px,transparent 1px 2px);"></div>
<div class="r" style="left:1059px;top:919px;width:1px;height:38px;background:repeating-linear-gradient(180deg,#2a6673 0 1px,transparent 1px 2px);"></div>
<div class="r" style="left:1122px;top:919px;width:1px;height:38px;background:repeating-linear-gradient(180deg,#2a6673 0 1px,transparent 1px 2px);"></div>
<div class="r" style="left:1279px;top:919px;width:1px;height:38px;background:repeating-linear-gradient(180deg,#2a6673 0 1px,transparent 1px 2px);"></div>
<div class="r" style="left:1360px;top:919px;width:1px;height:38px;background:repeating-linear-gradient(180deg,#2a6673 0 1px,transparent 1px 2px);"></div>
<div class="r" style="left:1549px;top:919px;width:1px;height:38px;background:repeating-linear-gradient(180deg,#2a6673 0 1px,transparent 1px 2px);"></div>
<div class="r" style="left:1740px;top:919px;width:1px;height:38px;background:repeating-linear-gradient(180deg,#2a6673 0 1px,transparent 1px 2px);"></div>
<div class="r" style="left:460px;top:919px;width:1396px;height:1px;background:#134f5c;"></div>
<div class="r" style="left:1360px;top:380px;width:190px;height:16px;background:transparent;border:2px solid #1a73e8;box-sizing:border-box;"></div>
<div class="r" style="left:1545px;top:391px;width:10px;height:10px;background:#0b57d0;border-radius:50%;box-shadow:0 0 0 1px #fff;"></div>
<div class="r" style="left:1856px;top:277px;width:15px;height:680px;background:#ffffff;"></div>
<div class="r" style="left:1857px;top:277px;width:14px;height:14px;background:#f8f9fa;"></div>
<div class="r" style="left:1856px;top:276px;width:15px;height:1px;background:#c4c7c5;"></div>
<div class="r" style="left:1856px;top:277px;width:1px;height:680px;background:#e1e3e1;"></div>
<div class="r" style="left:1856px;top:291px;width:15px;height:1px;background:#c4c7c5;"></div>
<div class="r" style="left:1858px;top:297px;width:11.5px;height:241.5px;background:#dadce0;border-radius:6px;"></div>
<div class="r" style="left:1857px;top:919px;width:14px;height:38px;background:#f8f8f8;"></div>
<div class="r" style="left:1857px;top:918px;width:14px;height:1px;background:#e1e3e1;"></div>
<div class="r" style="left:1857px;top:938px;width:14px;height:1px;background:#e1e3e1;"></div>
<svg class="s" style="left:1858px;top:923px;" width="11" height="8" viewBox="0 0 11 8"><path d="M1.5 6.5 H9.5 L5.5 2 Z" fill="#9aa0a6"/></svg>
<div class="r" style="left:1857px;top:937px;width:9px;height:1px;background:#c6d4f5;"></div>
<svg class="s" style="left:1858px;top:944px;" width="11" height="8" viewBox="0 0 11 8"><path d="M1.5 1.5 H9.5 L5.5 6 Z" fill="#9aa0a6"/></svg>
<div class="r" style="left:1px;top:957px;width:1870px;height:16px;background:#ffffff;"></div>
<div class="r" style="left:1px;top:957px;width:1855px;height:1px;background:#e1e3e1;"></div>
<div class="r" style="left:1px;top:958px;width:28px;height:14px;background:#f8f8f8;"></div>
<div class="r" style="left:29px;top:958px;width:1px;height:14px;background:#d5d5d5;"></div>
<div class="r" style="left:31px;top:959px;width:1686px;height:12px;background:#dadce0;border-radius:6px;"></div>
<div class="r" style="left:1818px;top:958px;width:38px;height:15px;background:#f8f8f8;"></div>
<div class="r" style="left:1817.5px;top:958px;width:1px;height:15px;background:#e1e3e1;"></div>
<div class="r" style="left:1837px;top:958px;width:1px;height:15px;background:#e1e3e1;"></div>
<div class="r" style="left:1856px;top:958px;width:1px;height:15px;background:#e1e3e1;"></div>
<svg class="s" style="left:1821px;top:960px;" width="10" height="10" viewBox="0 0 10 10"><path d="M7.5 1.5 V8.5 L2.5 5 Z" fill="#9aa0a6"/></svg>
<svg class="s" style="left:1842px;top:960px;" width="10" height="10" viewBox="0 0 10 10"><path d="M2.5 1.5 V8.5 L7.5 5 Z" fill="#9aa0a6"/></svg>
<div class="r" style="left:1px;top:973px;width:1870px;height:1px;background:#e1e3e1;"></div>
<div class="r" style="left:1px;top:974px;width:1870px;height:45px;background:#f9fbfd;"></div>
<svg class="s" style="left:69px;top:988px;" width="17" height="17" viewBox="0 0 17 17"><path d="M8.5 2 V15 M2 8.5 H15" stroke="#444746" stroke-width="2"/></svg>
<svg class="s" style="left:116px;top:989px;" width="22" height="16" viewBox="0 0 22 16"><path d="M2 2.5 H20 M2 8 H20 M2 13.5 H20" stroke="#444746" stroke-width="2"/></svg>
<div class="r" style="left:156px;top:984px;width:1.5px;height:25px;background:#c7c7c7;"></div>
<div class="t" style="left:174.60px;top:988.99px;font-size:18.2px;line-height:18.2px;color:#444746;transform:scaleX(1.0860);transform-origin:0 0;-webkit-text-stroke:0.35px #444746;">Decentralization Checklist</div>
<svg class="s" style="left:415px;top:993px;" width="12" height="8" viewBox="0 0 12 8"><path d="M1 1.5 H11 L6 6.5 Z" fill="#444746"/></svg>
<div class="r" style="left:159.3px;top:1015px;width:281.59999999999997px;height:4px;background:#38761d;"></div>
<div class="t" style="left:457.50px;top:988.99px;font-size:18.2px;line-height:18.2px;color:#444746;transform:scaleX(1.1016);transform-origin:0 0;-webkit-text-stroke:0.35px #444746;">Interoperability Checklist</div>
<svg class="s" style="left:689px;top:993px;" width="12" height="8" viewBox="0 0 12 8"><path d="M1 1.5 H11 L6 6.5 Z" fill="#444746"/></svg>
<div class="r" style="left:442.6px;top:1015px;width:272.0px;height:4px;background:#38761d;"></div>
<div class="t" style="left:732.00px;top:988.99px;font-size:18.2px;line-height:18.2px;color:#444746;transform:scaleX(1.0754);transform-origin:0 0;-webkit-text-stroke:0.35px #444746;">Privacy Checklist</div>
<svg class="s" style="left:894px;top:993px;" width="12" height="8" viewBox="0 0 12 8"><path d="M1 1.5 H11 L6 6.5 Z" fill="#444746"/></svg>
<div class="r" style="left:716.5px;top:1015px;width:203.70000000000005px;height:4px;background:#38761d;"></div>
<div class="t" style="left:936.20px;top:988.99px;font-size:18.2px;line-height:18.2px;color:#444746;transform:scaleX(1.0721);transform-origin:0 0;-webkit-text-stroke:0.35px #444746;">Compliance Checklist</div>
<svg class="s" style="left:1137px;top:993px;" width="12" height="8" viewBox="0 0 12 8"><path d="M1 1.5 H11 L6 6.5 Z" fill="#444746"/></svg>
<div class="r" style="left:921.5px;top:1015px;width:241.29999999999995px;height:4px;background:#38761d;"></div>
<div class="t" style="left:1178.60px;top:988.99px;font-size:18.2px;line-height:18.2px;color:#444746;transform:scaleX(1.0910);transform-origin:0 0;-webkit-text-stroke:0.35px #444746;">Usability Checklist</div>
<svg class="s" style="left:1354px;top:993px;" width="12" height="8" viewBox="0 0 12 8"><path d="M1 1.5 H11 L6 6.5 Z" fill="#444746"/></svg>
<div class="r" style="left:1164.4px;top:1015px;width:214.5999999999999px;height:4px;background:#38761d;"></div>
<div class="r" style="left:1379.4px;top:974px;width:136.6px;height:45px;background:#e1e9f7;"></div>
<div class="t" style="left:1394.10px;top:989.49px;font-size:18.2px;line-height:18.2px;color:#0b57d0;transform:scaleX(1.0646);transform-origin:0 0;-webkit-text-stroke:0.6px #0b57d0;">Summary</div>
<svg class="s" style="left:1491px;top:993px;" width="12" height="8" viewBox="0 0 12 8"><path d="M1 1.5 H11 L6 6.5 Z" fill="#0b57d0"/></svg>
<div class="r" style="left:1380.2px;top:1015px;width:135px;height:4px;background:#073763;"></div>
<svg class="s" style="left:1540px;top:989px;" width="13" height="16" viewBox="0 0 13 16"><path d="M10 2 L3.5 8 L10 14" stroke="#444746" stroke-width="2.2" fill="none"/></svg>
<svg class="s" style="left:1589px;top:989px;" width="13" height="16" viewBox="0 0 13 16"><path d="M3 2 L9.5 8 L3 14" stroke="#a8abae" stroke-width="2.2" fill="none"/></svg>
<svg class="s" style="left:1754px;top:986px;" width="21" height="22" viewBox="0 0 21 22"><path d="M3 1.5 H18 Q19.5 1.5 19.5 3 V16.5 Q19.5 18 18 18 H13.5 L10.5 21 L7.5 18 H3 Q1.5 18 1.5 16.5 V3 Q1.5 1.5 3 1.5 Z" fill="#5f6368"/><path d="M10.5 4 L12 8.5 L16.5 10 L12 11.5 L10.5 16 L9 11.5 L4.5 10 L9 8.5 Z" fill="#fff"/></svg>
<svg class="s" style="left:1830px;top:993px;" width="13" height="15" viewBox="0 0 13 15"><path d="M10 2 L3.5 7.5 L10 13" stroke="#444746" stroke-width="2.2" fill="none"/></svg>
<div class="r" style="left:0px;top:1018px;width:1871px;height:1px;background:#ffffff;"></div>
<div class="r" style="left:0px;top:1019px;width:1871px;height:1px;background:#6b6b6b;"></div>
<div class="r" style="left:0px;top:0px;width:1871px;height:1px;background:#808080;"></div>
<div class="r" style="left:0px;top:0px;width:1px;height:1020px;background:#6f6f6f;"></div>
</body></html>
